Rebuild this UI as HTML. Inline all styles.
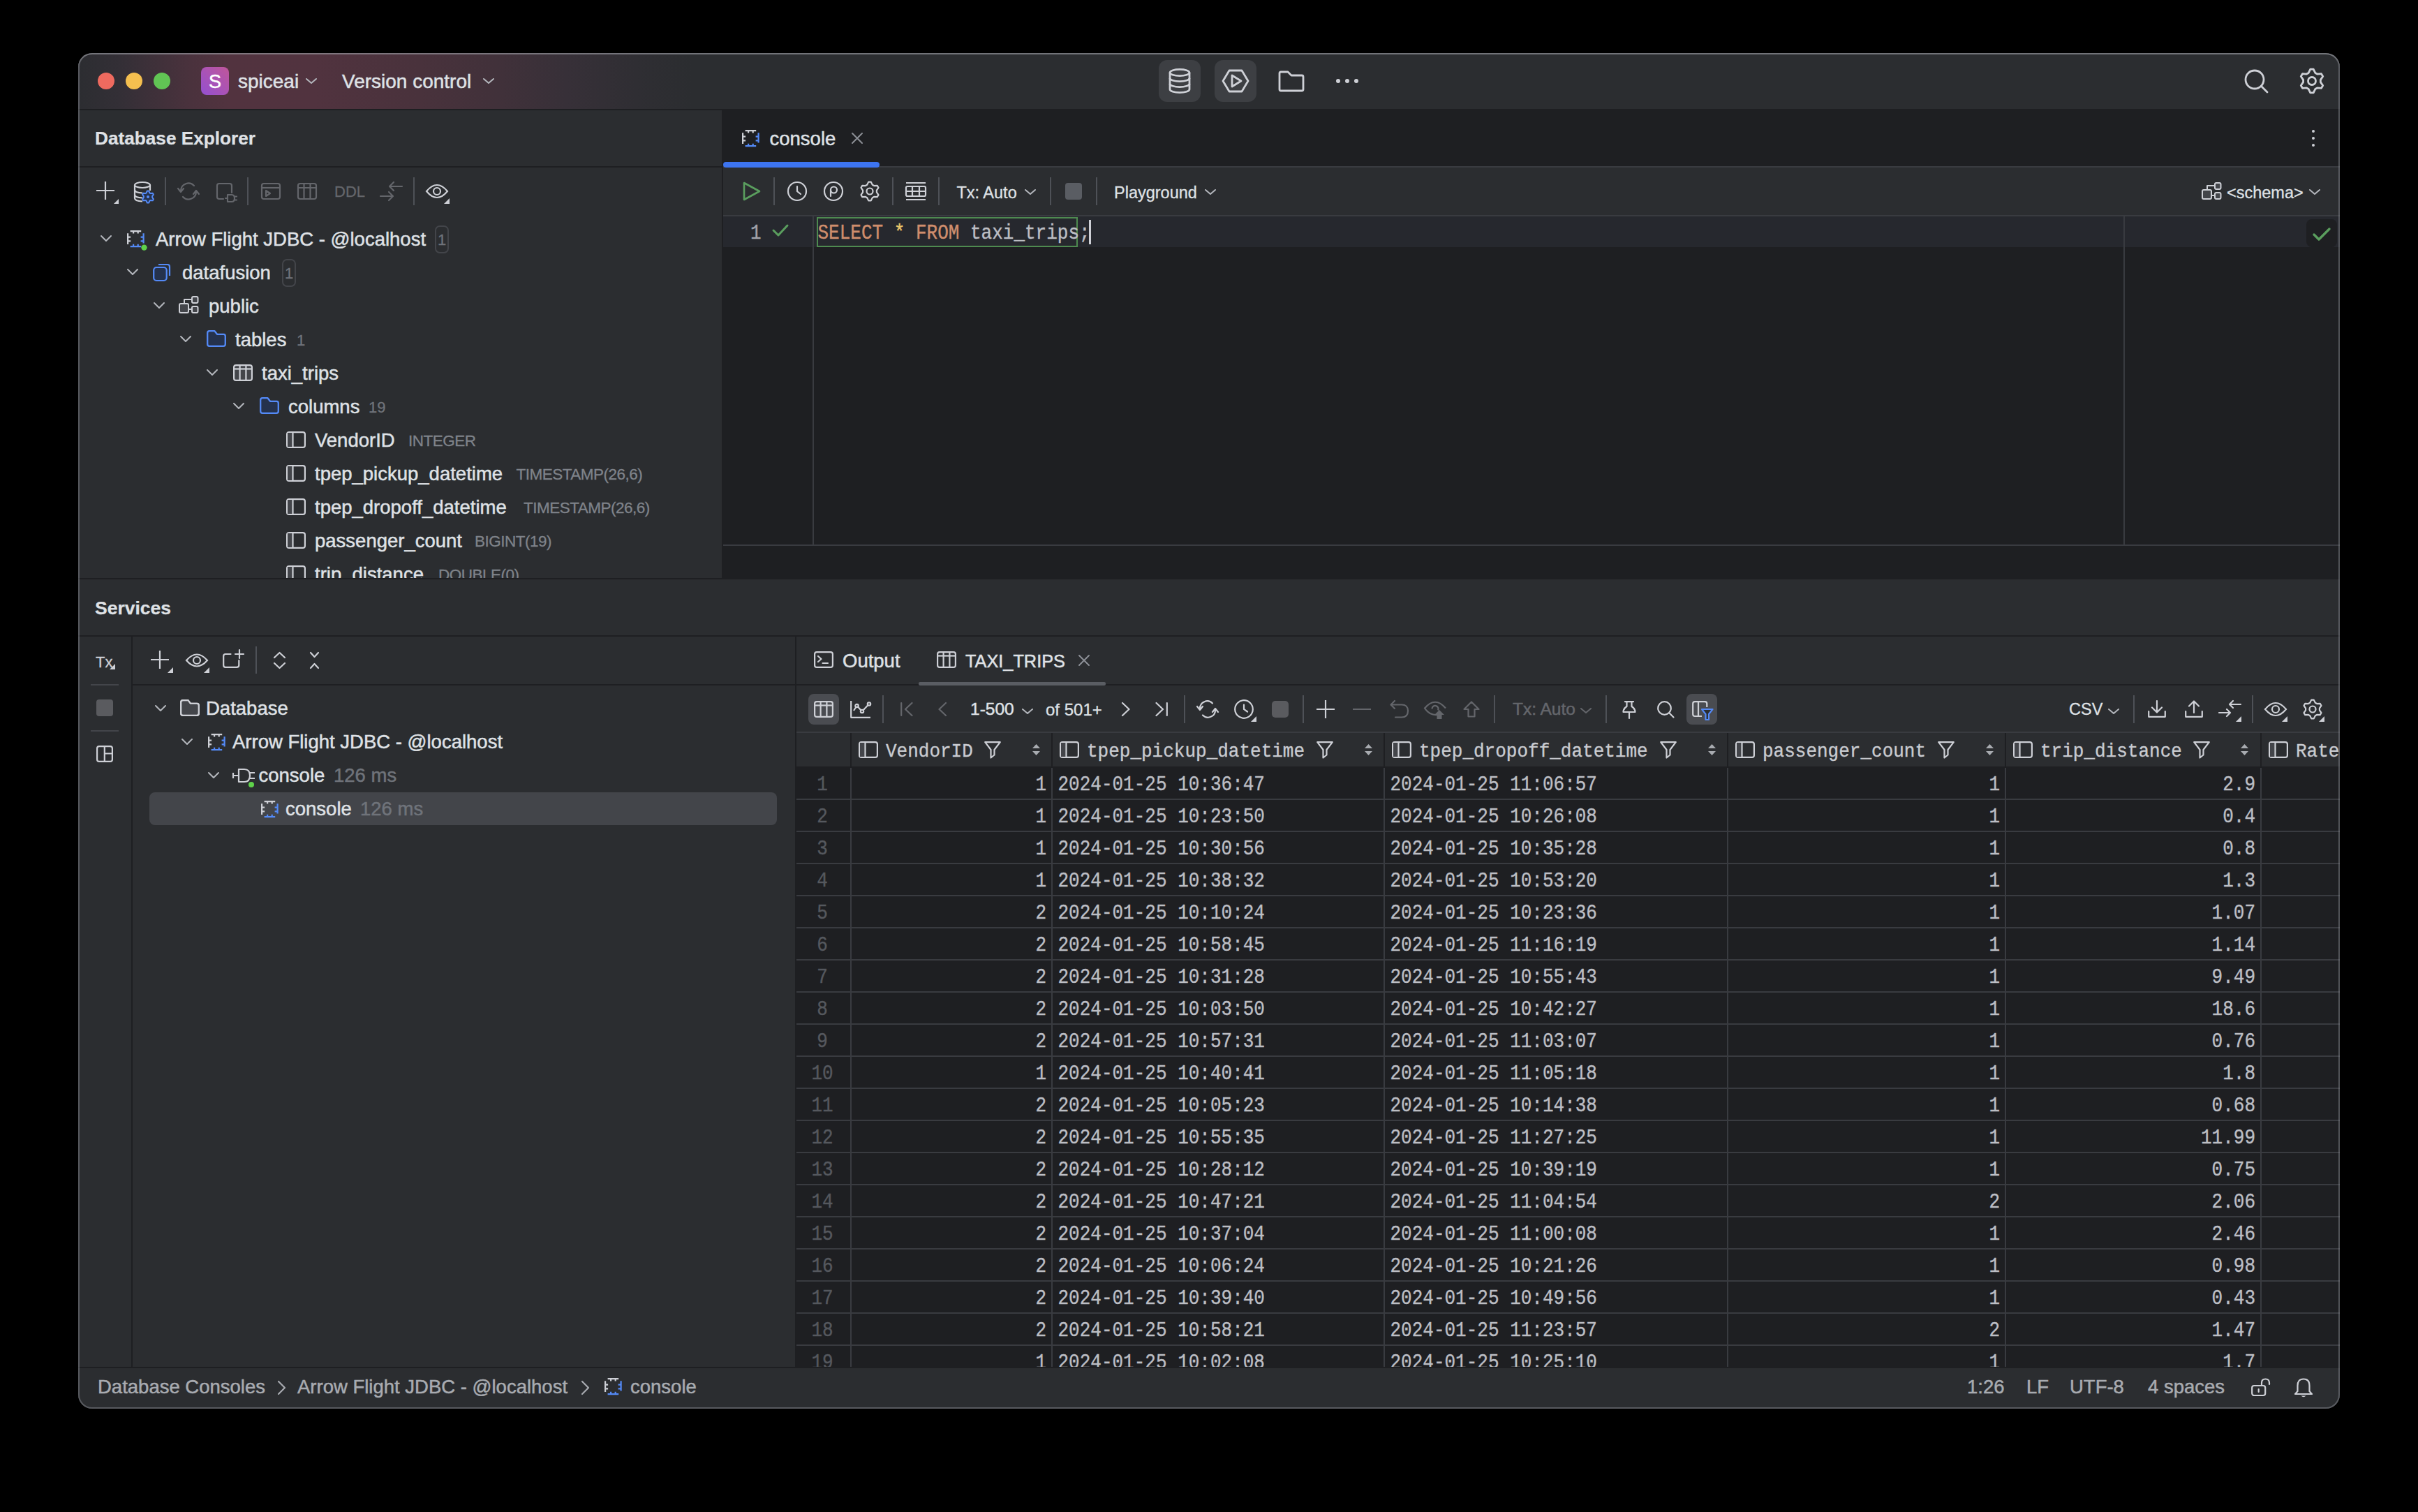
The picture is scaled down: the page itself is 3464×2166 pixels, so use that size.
<!DOCTYPE html><html><head><meta charset="utf-8"><style>
html,body{margin:0;padding:0;background:#000;width:3464px;height:2166px;overflow:hidden;}
*{box-sizing:border-box;}
#w{position:absolute;left:0;top:0;width:3464px;height:2166px;clip-path:inset(76px 112px 148px 112px round 20px);background:#2b2d30;}
#w div, #w svg{position:absolute;}
</style></head><body><div id="w">
<div style="position:absolute;left:112px;top:76px;width:3240px;height:80px;background:#2b2d30;"></div>
<div style="position:absolute;left:112px;top:76px;width:900px;height:80px;background:linear-gradient(90deg,#2c2d31 0px,#332f36 58px,#4a323d 160px,#52333f 218px,#51333f 338px,#49323c 488px,#41313a 600px,#373038 700px,#2f2e33 800px,#2b2d30 880px);"></div>
<div style="position:absolute;left:112px;top:156px;width:3240px;height:2px;background:#1e1f22;"></div>
<div style="position:absolute;left:140px;top:104px;width:24px;height:24px;border-radius:12px;background:#ee6a5f;"></div>
<div style="position:absolute;left:180px;top:104px;width:24px;height:24px;border-radius:12px;background:#f5bf4f;"></div>
<div style="position:absolute;left:220px;top:104px;width:24px;height:24px;border-radius:12px;background:#61c554;"></div>
<div style="position:absolute;left:288px;top:96px;width:40px;height:40px;border-radius:8px;background:linear-gradient(45deg,#9450d0 0%,#c0569a 100%);"></div>
<div style="position:absolute;left:108px;width:400px;text-align:center;top:103.74px;font-family:'Liberation Sans', sans-serif;font-size:27px;line-height:27px;font-weight:400;color:#ffffff;white-space:pre;-webkit-text-stroke:0.5px #ffffff;">S</div>
<div style="position:absolute;left:341px;top:102.90px;font-family:'Liberation Sans', sans-serif;font-size:28px;line-height:28px;font-weight:400;color:#dfe1e5;white-space:pre;-webkit-text-stroke:0.5px #dfe1e5;">spiceai</div>
<svg style="position:absolute;left:438.0px;top:112.0px;overflow:visible;" width="16" height="8.0" viewBox="0 0 16 8.0" fill="none"><path d="M1 1 L8.0 7.0 L15 1" stroke="#b4b7bd" stroke-width="2" stroke-linecap="round" stroke-linejoin="round"/></svg>
<div style="position:absolute;left:490px;top:102.90px;font-family:'Liberation Sans', sans-serif;font-size:28px;line-height:28px;font-weight:400;color:#dfe1e5;white-space:pre;-webkit-text-stroke:0.5px #dfe1e5;">Version control</div>
<svg style="position:absolute;left:692.0px;top:112.0px;overflow:visible;" width="16" height="8.0" viewBox="0 0 16 8.0" fill="none"><path d="M1 1 L8.0 7.0 L15 1" stroke="#b4b7bd" stroke-width="2" stroke-linecap="round" stroke-linejoin="round"/></svg>
<div style="position:absolute;left:1660px;top:86px;width:60px;height:60px;border-radius:12px;background:#3d3f43;"></div>
<div style="position:absolute;left:1740px;top:86px;width:60px;height:60px;border-radius:12px;background:#3d3f43;"></div>
<svg style="position:absolute;left:1674px;top:98px;overflow:visible;" width="32" height="36" viewBox="0 0 32 36" fill="none"><g stroke="#ced0d6" stroke-width="2.8" fill="none"><ellipse cx="16" cy="6" rx="14" ry="4.6"/><path d="M2 6 V30 A14 4.6 0 0 0 30 30 V6"/><path d="M2 14 A14 4.6 0 0 0 30 14"/><path d="M2 22 A14 4.6 0 0 0 30 22"/></g></svg>
<svg style="position:absolute;left:1751px;top:99px;overflow:visible;" width="38" height="34" viewBox="0 0 38 34" fill="none"><g stroke="#ced0d6" stroke-width="2.8" stroke-linejoin="round" fill="none"><path d="M10 2 H28 L37 17 L28 32 H10 L1 17 Z"/><path d="M14 9 V25 L27 17 Z"/></g></svg>
<svg style="position:absolute;left:1832px;top:101px;overflow:visible;" width="36" height="30" viewBox="0 0 36 30" fill="none"><path d="M3 2 H13 L18 7 H33 Q35 7 35 9 V27 Q35 29 33 29 H3 Q1 29 1 27 V4 Q1 2 3 2 Z" stroke="#ced0d6" stroke-width="2.8" stroke-linejoin="round" fill="none"/></svg>
<div style="position:absolute;left:1913.8px;top:112.8px;width:6.4px;height:6.4px;border-radius:4px;background:#ced0d6;"></div>
<div style="position:absolute;left:1926.8px;top:112.8px;width:6.4px;height:6.4px;border-radius:4px;background:#ced0d6;"></div>
<div style="position:absolute;left:1939.8px;top:112.8px;width:6.4px;height:6.4px;border-radius:4px;background:#ced0d6;"></div>
<svg style="position:absolute;left:3214px;top:98px;overflow:visible;" width="38" height="38" viewBox="0 0 38 38" fill="none"><g stroke="#ced0d6" stroke-width="2.8" stroke-linecap="round" fill="none"><circle cx="16" cy="16" r="13"/><path d="M25.5 25.5 L34 34"/></g></svg>
<svg style="position:absolute;left:3293px;top:97px;overflow:visible;" width="38" height="38" viewBox="0 0 38 38" fill="none"><g stroke="#ced0d6" stroke-width="2.8" stroke-linejoin="round" fill="none"><path d="M16.78 2.15 L21.22 2.15 L23.78 7.45 L26.61 9.08 L32.49 8.65 L34.71 12.49 L31.39 17.37 L31.39 20.63 L34.71 25.51 L32.49 29.35 L26.61 28.92 L23.78 30.55 L21.22 35.85 L16.78 35.85 L14.22 30.55 L11.39 28.92 L5.51 29.35 L3.29 25.51 L6.61 20.63 L6.61 17.37 L3.29 12.49 L5.51 8.65 L11.39 9.08 L14.22 7.45 Z"/><circle cx="19" cy="19" r="5.5"/></g></svg>
<div style="position:absolute;left:112px;top:158px;width:922px;height:670px;background:#2b2d30;"></div>
<div style="position:absolute;left:136px;top:185.42px;font-family:'Liberation Sans', sans-serif;font-size:26.2px;line-height:26.2px;font-weight:700;color:#dfe1e5;white-space:pre;-webkit-text-stroke:0.25px #dfe1e5;">Database Explorer</div>
<div style="position:absolute;left:112px;top:238px;width:922px;height:2px;background:#1e1f22;"></div>
<svg style="position:absolute;left:138.0px;top:260.0px;overflow:visible;" width="26" height="26" viewBox="0 0 26 26" fill="none"><path d="M13.0 0 V26 M0 13.0 H26" stroke="#ced0d6" stroke-width="2.2"/></svg>
<svg style="position:absolute;left:163px;top:285px;overflow:visible;" width="7" height="7" viewBox="0 0 7 7" fill="none"><path d="M7 0 L7 7 L0 7 Z" fill="#ced0d6"/></svg>
<svg style="position:absolute;left:192px;top:260px;overflow:visible;" width="26" height="30" viewBox="0 0 26 30" fill="none"><g stroke="#ced0d6" stroke-width="2.2" fill="none"><ellipse cx="12" cy="5" rx="11" ry="4"/><path d="M1 5 V24 Q1 28 12 28.5 M23 5 V13"/><path d="M1 12 Q1 16 12 16.5 M1 19 Q1 23 12 23.5"/></g></svg>
<svg style="position:absolute;left:202px;top:272px;overflow:visible;" width="20" height="20" viewBox="0 0 20 20" fill="none"><path d="M8.88 1.47 L11.12 1.47 L12.37 4.27 L13.77 5.08 L16.82 4.76 L17.95 6.71 L16.15 9.19 L16.15 10.81 L17.95 13.29 L16.82 15.24 L13.77 14.92 L12.37 15.73 L11.12 18.53 L8.88 18.53 L7.63 15.73 L6.23 14.92 L3.18 15.24 L2.05 13.29 L3.85 10.81 L3.85 9.19 L2.05 6.71 L3.18 4.76 L6.23 5.08 L7.63 4.27 Z" stroke="#548af7" stroke-width="2" fill="#25324d" stroke-linejoin="round"/><circle cx="10" cy="10" r="2" fill="#548af7"/></svg>
<div style="position:absolute;left:236.0px;top:254px;width:2.0px;height:40px;background:#4e5157;"></div>
<svg style="position:absolute;left:254px;top:261px;overflow:visible;" width="32" height="26" viewBox="0 0 32 26" fill="none"><g stroke="#64666b" stroke-width="2.2" fill="none" stroke-linecap="round" stroke-linejoin="round"><path d="M24 5 A11 11 0 0 0 5 12"/><path d="M1 9 L5 14 L9 9"/><path d="M8 21 A11 11 0 0 0 27 14"/><path d="M23 17 L27 12 L31 17"/></g></svg>
<svg style="position:absolute;left:310px;top:262px;overflow:visible;" width="30" height="30" viewBox="0 0 30 30" fill="none"><g stroke="#64666b" stroke-width="2.2" fill="none" stroke-linecap="round" stroke-linejoin="round"><path d="M10 23 H4 Q1 23 1 20 V4 Q1 1 4 1 H19 Q22 1 22 4 V14"/><path d="M16 17 H22 Q26 17 26 22 Q26 27 22 27 H16 Z M26 19.5 H29 M26 24.5 H29 M16 22 H13"/></g></svg>
<div style="position:absolute;left:354.0px;top:254px;width:2.0px;height:40px;background:#4e5157;"></div>
<svg style="position:absolute;left:374px;top:262px;overflow:visible;" width="28" height="24" viewBox="0 0 28 24" fill="none"><g stroke="#64666b" stroke-width="2.2" fill="none" stroke-linejoin="round"><rect x="1" y="1" width="26" height="22" rx="3"/><path d="M1 7 H27"/><path d="M7 11 V19 L13 15 Z"/></g></svg>
<svg style="position:absolute;left:426px;top:262px;overflow:visible;" width="28" height="24" viewBox="0 0 28 24" fill="none"><g stroke="#64666b" stroke-width="2.2" fill="none"><rect x="1" y="1" width="26" height="22" rx="3"/><path d="M1 7 H27 M9.5 1 V23 M18.5 1 V23"/></g></svg>
<div style="position:absolute;left:479px;top:263.98px;font-family:'Liberation Sans', sans-serif;font-size:22px;line-height:22px;font-weight:400;color:#64666b;white-space:pre;-webkit-text-stroke:0.3px #64666b;">DDL</div>
<svg style="position:absolute;left:544px;top:259px;overflow:visible;" width="34" height="28" viewBox="0 0 34 28" fill="none"><g stroke="#64666b" stroke-width="2.2" fill="none" stroke-linecap="round" stroke-linejoin="round"><path d="M32 8 H16 M20 2 L14 8 L20 14"/><path d="M1 22 H17 M13 16 L19 22 L13 28"/></g></svg>
<div style="position:absolute;left:592.0px;top:254px;width:2.0px;height:40px;background:#4e5157;"></div>
<svg style="position:absolute;left:610px;top:262px;overflow:visible;" width="32" height="24" viewBox="0 0 32 24" fill="none"><g stroke="#ced0d6" stroke-width="2.2" fill="none"><path d="M1 12 Q16 -6 31 12 Q16 30 1 12 Z"/><circle cx="16" cy="12" r="5"/></g></svg>
<svg style="position:absolute;left:636px;top:284px;overflow:visible;" width="8" height="8" viewBox="0 0 8 8" fill="none"><path d="M8 0 L8 8 L0 8 Z" fill="#ced0d6"/></svg>
<svg style="position:absolute;left:144px;top:337px;overflow:visible;" width="16" height="10" viewBox="0 0 16 10" fill="none"><path d="M1 1 L8 8 L15 1" stroke="#b4b7bd" stroke-width="2" fill="none" stroke-linecap="round" stroke-linejoin="round"/></svg>
<svg style="position:absolute;left:182px;top:330px;overflow:visible;" width="25" height="25" viewBox="0 0 25 25" fill="none"><g stroke-width="2.2" fill="none" stroke-linecap="butt"><path d="M4.6 1.2 H20.2 M9.1 1.2 V4.6 M15.7 1.2 V4.6" stroke="#ced0d6"/><path d="M1.1 4.2 V19.9 M1.1 9.7 H5.1 M1.1 15.3 H5.1" stroke="#ced0d6"/><path d="M23.6 4.2 V18.5 M23.6 9.7 H19.6 M23.6 15.3 H19.6" stroke="#548af7"/><path d="M4.6 23.1 H20.2 M9.1 23.1 V19.7 M15.7 23.1 V19.7" stroke="#548af7"/></g><circle cx="24.5" cy="24.6" r="4.2" fill="#5fd14a"/></svg>
<div style="position:absolute;left:223px;top:329.32px;font-family:'Liberation Sans', sans-serif;font-size:27.5px;line-height:27.5px;font-weight:400;color:#dfe1e5;white-space:pre;-webkit-text-stroke:0.5px #dfe1e5;">Arrow Flight JDBC - @localhost</div>
<div style="position:absolute;left:623px;top:322.5px;width:20px;height:40px;border:2px solid #43454a;border-radius:7px;"></div>
<div style="position:absolute;left:433px;width:400px;text-align:center;top:333.48px;font-family:'Liberation Sans', sans-serif;font-size:22px;line-height:22px;font-weight:400;color:#6f737a;white-space:pre;-webkit-text-stroke:0.3px #6f737a;">1</div>
<svg style="position:absolute;left:182px;top:385px;overflow:visible;" width="16" height="10" viewBox="0 0 16 10" fill="none"><path d="M1 1 L8 8 L15 1" stroke="#b4b7bd" stroke-width="2" fill="none" stroke-linecap="round" stroke-linejoin="round"/></svg>
<svg style="position:absolute;left:219px;top:377px;overflow:visible;" width="26" height="26" viewBox="0 0 26 26" fill="none"><path d="M8 2 H21 Q24 2 24 5 V18" stroke="#548af7" stroke-width="2.2" fill="none"/><rect x="1.2" y="6" width="18.5" height="19" rx="4" stroke="#548af7" stroke-width="2.2" fill="#25324d"/></svg>
<div style="position:absolute;left:261px;top:377.32px;font-family:'Liberation Sans', sans-serif;font-size:27.5px;line-height:27.5px;font-weight:400;color:#dfe1e5;white-space:pre;-webkit-text-stroke:0.5px #dfe1e5;">datafusion</div>
<div style="position:absolute;left:404px;top:370.5px;width:20px;height:40px;border:2px solid #43454a;border-radius:7px;"></div>
<div style="position:absolute;left:214px;width:400px;text-align:center;top:381.48px;font-family:'Liberation Sans', sans-serif;font-size:22px;line-height:22px;font-weight:400;color:#6f737a;white-space:pre;-webkit-text-stroke:0.3px #6f737a;">1</div>
<svg style="position:absolute;left:220px;top:433px;overflow:visible;" width="16" height="10" viewBox="0 0 16 10" fill="none"><path d="M1 1 L8 8 L15 1" stroke="#b4b7bd" stroke-width="2" fill="none" stroke-linecap="round" stroke-linejoin="round"/></svg>
<svg style="position:absolute;left:256px;top:424px;overflow:visible;" width="28" height="26" viewBox="0 0 28 26" fill="none"><g stroke="#ced0d6" stroke-width="2" stroke-linejoin="round"><path d="M8 11 V5 H19" fill="none"/><path d="M14 19 H19" fill="none"/><rect x="1" y="11" width="13" height="13" rx="2" fill="#43454a"/><rect x="19" y="1" width="8.5" height="9" rx="2" fill="#43454a"/><rect x="19" y="15" width="8.5" height="9" rx="2" fill="#43454a"/></g></svg>
<div style="position:absolute;left:299px;top:425.32px;font-family:'Liberation Sans', sans-serif;font-size:27.5px;line-height:27.5px;font-weight:400;color:#dfe1e5;white-space:pre;-webkit-text-stroke:0.5px #dfe1e5;">public</div>
<svg style="position:absolute;left:258px;top:481px;overflow:visible;" width="16" height="10" viewBox="0 0 16 10" fill="none"><path d="M1 1 L8 8 L15 1" stroke="#b4b7bd" stroke-width="2" fill="none" stroke-linecap="round" stroke-linejoin="round"/></svg>
<svg style="position:absolute;left:296px;top:473px;overflow:visible;" width="28" height="24" viewBox="0 0 28 24" fill="none"><path d="M4 1.2 H11.5 L15 5.8 H24.5 Q26.8 5.8 26.8 8.5 V20 Q26.8 22.8 24 22.8 H4 Q1.2 22.8 1.2 20 V4 Q1.2 1.2 4 1.2 Z" stroke="#548af7" stroke-width="2.3" fill="#25324d" stroke-linejoin="round"/></svg>
<div style="position:absolute;left:337px;top:473.32px;font-family:'Liberation Sans', sans-serif;font-size:27.5px;line-height:27.5px;font-weight:400;color:#dfe1e5;white-space:pre;-webkit-text-stroke:0.5px #dfe1e5;">tables</div>
<div style="position:absolute;left:425px;top:476.98px;font-family:'Liberation Sans', sans-serif;font-size:22px;line-height:22px;font-weight:400;color:#6f737a;white-space:pre;-webkit-text-stroke:0.3px #6f737a;">1</div>
<svg style="position:absolute;left:296px;top:529px;overflow:visible;" width="16" height="10" viewBox="0 0 16 10" fill="none"><path d="M1 1 L8 8 L15 1" stroke="#b4b7bd" stroke-width="2" fill="none" stroke-linecap="round" stroke-linejoin="round"/></svg>
<svg style="position:absolute;left:334px;top:522px;overflow:visible;" width="28" height="24" viewBox="0 0 28 24" fill="none"><g stroke="#ced0d6" stroke-width="2.2"><rect x="1.1" y="1.1" width="25.8" height="21.8" rx="3" fill="#43454a"/><path d="M1.1 6.5 H26.9"/><path d="M9.6 1 V23 M18.4 1 V23"/></g></svg>
<div style="position:absolute;left:375px;top:521.32px;font-family:'Liberation Sans', sans-serif;font-size:27.5px;line-height:27.5px;font-weight:400;color:#dfe1e5;white-space:pre;-webkit-text-stroke:0.5px #dfe1e5;">taxi_trips</div>
<svg style="position:absolute;left:334px;top:577px;overflow:visible;" width="16" height="10" viewBox="0 0 16 10" fill="none"><path d="M1 1 L8 8 L15 1" stroke="#b4b7bd" stroke-width="2" fill="none" stroke-linecap="round" stroke-linejoin="round"/></svg>
<svg style="position:absolute;left:372px;top:569px;overflow:visible;" width="28" height="24" viewBox="0 0 28 24" fill="none"><path d="M4 1.2 H11.5 L15 5.8 H24.5 Q26.8 5.8 26.8 8.5 V20 Q26.8 22.8 24 22.8 H4 Q1.2 22.8 1.2 20 V4 Q1.2 1.2 4 1.2 Z" stroke="#548af7" stroke-width="2.3" fill="#25324d" stroke-linejoin="round"/></svg>
<div style="position:absolute;left:413px;top:569.32px;font-family:'Liberation Sans', sans-serif;font-size:27.5px;line-height:27.5px;font-weight:400;color:#dfe1e5;white-space:pre;-webkit-text-stroke:0.5px #dfe1e5;">columns</div>
<div style="position:absolute;left:528px;top:572.98px;font-family:'Liberation Sans', sans-serif;font-size:22px;line-height:22px;font-weight:400;color:#6f737a;white-space:pre;-webkit-text-stroke:0.3px #6f737a;">19</div>
<svg style="position:absolute;left:410px;top:618px;overflow:visible;" width="28" height="24" viewBox="0 0 28 24" fill="none"><g stroke="#ced0d6" stroke-width="2.2"><rect x="1.1" y="1.1" width="25.8" height="21.8" rx="3" fill="none"/><rect x="2" y="2" width="7" height="20" fill="#43454a" stroke="none"/><path d="M9.5 1 V23"/></g></svg>
<div style="position:absolute;left:451px;top:617.32px;font-family:'Liberation Sans', sans-serif;font-size:27.5px;line-height:27.5px;font-weight:400;color:#dfe1e5;white-space:pre;-webkit-text-stroke:0.5px #dfe1e5;">VendorID</div>
<div style="position:absolute;left:585px;top:621.05px;font-family:'Liberation Sans', sans-serif;font-size:22.5px;line-height:22.5px;font-weight:400;color:#7f838a;white-space:pre;-webkit-text-stroke:0.3px #7f838a;letter-spacing:-0.5px;">INTEGER</div>
<svg style="position:absolute;left:410px;top:666px;overflow:visible;" width="28" height="24" viewBox="0 0 28 24" fill="none"><g stroke="#ced0d6" stroke-width="2.2"><rect x="1.1" y="1.1" width="25.8" height="21.8" rx="3" fill="none"/><rect x="2" y="2" width="7" height="20" fill="#43454a" stroke="none"/><path d="M9.5 1 V23"/></g></svg>
<div style="position:absolute;left:451px;top:665.32px;font-family:'Liberation Sans', sans-serif;font-size:27.5px;line-height:27.5px;font-weight:400;color:#dfe1e5;white-space:pre;-webkit-text-stroke:0.5px #dfe1e5;">tpep_pickup_datetime</div>
<div style="position:absolute;left:739.5px;top:669.05px;font-family:'Liberation Sans', sans-serif;font-size:22.5px;line-height:22.5px;font-weight:400;color:#7f838a;white-space:pre;-webkit-text-stroke:0.3px #7f838a;letter-spacing:-0.5px;">TIMESTAMP(26,6)</div>
<svg style="position:absolute;left:410px;top:714px;overflow:visible;" width="28" height="24" viewBox="0 0 28 24" fill="none"><g stroke="#ced0d6" stroke-width="2.2"><rect x="1.1" y="1.1" width="25.8" height="21.8" rx="3" fill="none"/><rect x="2" y="2" width="7" height="20" fill="#43454a" stroke="none"/><path d="M9.5 1 V23"/></g></svg>
<div style="position:absolute;left:451px;top:713.32px;font-family:'Liberation Sans', sans-serif;font-size:27.5px;line-height:27.5px;font-weight:400;color:#dfe1e5;white-space:pre;-webkit-text-stroke:0.5px #dfe1e5;">tpep_dropoff_datetime</div>
<div style="position:absolute;left:750px;top:717.05px;font-family:'Liberation Sans', sans-serif;font-size:22.5px;line-height:22.5px;font-weight:400;color:#7f838a;white-space:pre;-webkit-text-stroke:0.3px #7f838a;letter-spacing:-0.5px;">TIMESTAMP(26,6)</div>
<svg style="position:absolute;left:410px;top:762px;overflow:visible;" width="28" height="24" viewBox="0 0 28 24" fill="none"><g stroke="#ced0d6" stroke-width="2.2"><rect x="1.1" y="1.1" width="25.8" height="21.8" rx="3" fill="none"/><rect x="2" y="2" width="7" height="20" fill="#43454a" stroke="none"/><path d="M9.5 1 V23"/></g></svg>
<div style="position:absolute;left:451px;top:761.32px;font-family:'Liberation Sans', sans-serif;font-size:27.5px;line-height:27.5px;font-weight:400;color:#dfe1e5;white-space:pre;-webkit-text-stroke:0.5px #dfe1e5;">passenger_count</div>
<div style="position:absolute;left:680px;top:765.05px;font-family:'Liberation Sans', sans-serif;font-size:22.5px;line-height:22.5px;font-weight:400;color:#7f838a;white-space:pre;-webkit-text-stroke:0.3px #7f838a;letter-spacing:-0.5px;">BIGINT(19)</div>
<svg style="position:absolute;left:410px;top:810px;overflow:visible;" width="28" height="24" viewBox="0 0 28 24" fill="none"><g stroke="#ced0d6" stroke-width="2.2"><rect x="1.1" y="1.1" width="25.8" height="21.8" rx="3" fill="none"/><rect x="2" y="2" width="7" height="20" fill="#43454a" stroke="none"/><path d="M9.5 1 V23"/></g></svg>
<div style="position:absolute;left:451px;top:809.32px;font-family:'Liberation Sans', sans-serif;font-size:27.5px;line-height:27.5px;font-weight:400;color:#dfe1e5;white-space:pre;-webkit-text-stroke:0.5px #dfe1e5;">trip_distance</div>
<div style="position:absolute;left:628px;top:813.05px;font-family:'Liberation Sans', sans-serif;font-size:22.5px;line-height:22.5px;font-weight:400;color:#7f838a;white-space:pre;-webkit-text-stroke:0.3px #7f838a;letter-spacing:-0.5px;">DOUBLE(0)</div>
<div style="position:absolute;left:1034px;top:158px;width:2318px;height:670px;background:#1e1f22;"></div>
<div style="position:absolute;left:1034px;top:158px;width:2px;height:670px;background:#1e1f22;"></div>
<div style="position:absolute;left:1036px;top:238px;width:2316px;height:2px;background:#393b40;"></div>
<div style="position:absolute;left:1036px;top:240px;width:2316px;height:68px;background:#2b2d30;"></div>
<div style="position:absolute;left:1036px;top:308px;width:2316px;height:2px;background:#393b40;"></div>
<svg style="position:absolute;left:1063px;top:186px;overflow:visible;" width="25" height="25" viewBox="0 0 25 25" fill="none"><g stroke-width="2.2" fill="none" stroke-linecap="butt"><path d="M4.6 1.2 H20.2 M9.1 1.2 V4.6 M15.7 1.2 V4.6" stroke="#ced0d6"/><path d="M1.1 4.2 V19.9 M1.1 9.7 H5.1 M1.1 15.3 H5.1" stroke="#ced0d6"/><path d="M23.6 4.2 V18.5 M23.6 9.7 H19.6 M23.6 15.3 H19.6" stroke="#548af7"/><path d="M4.6 23.1 H20.2 M9.1 23.1 V19.7 M15.7 23.1 V19.7" stroke="#548af7"/></g></svg>
<div style="position:absolute;left:1102.5px;top:185.32px;font-family:'Liberation Sans', sans-serif;font-size:27.5px;line-height:27.5px;font-weight:400;color:#dfe1e5;white-space:pre;-webkit-text-stroke:0.5px #dfe1e5;">console</div>
<svg style="position:absolute;left:1220px;top:190px;overflow:visible;" width="16" height="16" viewBox="0 0 16 16" fill="none"><path d="M1 1 L15 15 M15 1 L1 15" stroke="#8c8f96" stroke-width="2" stroke-linecap="round"/></svg>
<div style="position:absolute;left:1036px;top:232px;width:224px;height:8px;border-radius:4px;background:#3d74f0;"></div>
<div style="position:absolute;left:3311.7px;top:185.7px;width:4.6px;height:4.6px;border-radius:3px;background:#ced0d6;"></div>
<div style="position:absolute;left:3311.7px;top:195.7px;width:4.6px;height:4.6px;border-radius:3px;background:#ced0d6;"></div>
<div style="position:absolute;left:3311.7px;top:205.7px;width:4.6px;height:4.6px;border-radius:3px;background:#ced0d6;"></div>
<svg style="position:absolute;left:1064px;top:260px;overflow:visible;" width="26" height="28" viewBox="0 0 26 28" fill="none"><path d="M2 2 V26 L24 14 Z" stroke="#5a9e5e" stroke-width="2.6" fill="none" stroke-linejoin="round"/></svg>
<div style="position:absolute;left:1107.5px;top:254px;width:2.0px;height:40px;background:#4e5157;"></div>
<svg style="position:absolute;left:1127px;top:259px;overflow:visible;" width="30" height="30" viewBox="0 0 30 30" fill="none"><g stroke="#ced0d6" stroke-width="2.2" fill="none" stroke-linecap="round"><circle cx="15" cy="15" r="13"/><path d="M15 8 V15 L20 19"/></g></svg>
<svg style="position:absolute;left:1179px;top:259px;overflow:visible;" width="30" height="30" viewBox="0 0 30 30" fill="none"><g stroke="#ced0d6" stroke-width="2.2" fill="none" stroke-linecap="round"><circle cx="15" cy="15" r="13"/><circle cx="15.5" cy="13" r="4.5"/><path d="M11 13 V22"/></g></svg>
<svg style="position:absolute;left:1231px;top:259px;overflow:visible;" width="30" height="30" viewBox="0 0 30 30" fill="none"><g stroke="#ced0d6" stroke-width="2.2" fill="none" stroke-linejoin="round"><path d="M13.24 1.62 L16.76 1.62 L18.83 5.76 L21.09 7.07 L25.71 6.78 L27.47 9.83 L24.91 13.69 L24.91 16.31 L27.47 20.17 L25.71 23.22 L21.09 22.93 L18.83 24.24 L16.76 28.38 L13.24 28.38 L11.17 24.24 L8.91 22.93 L4.29 23.22 L2.53 20.17 L5.09 16.31 L5.09 13.69 L2.53 9.83 L4.29 6.78 L8.91 7.07 L11.17 5.76 Z"/><circle cx="15" cy="15" r="4.5"/></g></svg>
<div style="position:absolute;left:1278.0px;top:254px;width:2.0px;height:40px;background:#4e5157;"></div>
<svg style="position:absolute;left:1297px;top:260px;overflow:visible;" width="30" height="28" viewBox="0 0 30 28" fill="none"><g stroke="#ced0d6" stroke-width="2.2" fill="none"><path d="M1 2 H29 M1 26 H29"/><rect x="1" y="7" width="28" height="14" rx="2"/><path d="M1 14 H29 M10 7 V21 M20 7 V21"/></g></svg>
<div style="position:absolute;left:1343.5px;top:254px;width:2.0px;height:40px;background:#4e5157;"></div>
<div style="position:absolute;left:1370.5px;top:264.71px;font-family:'Liberation Sans', sans-serif;font-size:23.5px;line-height:23.5px;font-weight:400;color:#dfe1e5;white-space:pre;-webkit-text-stroke:0.3px #dfe1e5;">Tx: Auto</div>
<svg style="position:absolute;left:1468.0px;top:271.0px;overflow:visible;" width="16" height="8.0" viewBox="0 0 16 8.0" fill="none"><path d="M1 1 L8.0 7.0 L15 1" stroke="#b4b7bd" stroke-width="2" stroke-linecap="round" stroke-linejoin="round"/></svg>
<div style="position:absolute;left:1504.0px;top:254px;width:2.0px;height:40px;background:#4e5157;"></div>
<div style="position:absolute;left:1526px;top:262px;width:24px;height:24px;border-radius:4px;background:#5a5d63;"></div>
<div style="position:absolute;left:1569.5px;top:254px;width:2.0px;height:40px;background:#4e5157;"></div>
<div style="position:absolute;left:1596px;top:264.71px;font-family:'Liberation Sans', sans-serif;font-size:23.5px;line-height:23.5px;font-weight:400;color:#dfe1e5;white-space:pre;-webkit-text-stroke:0.3px #dfe1e5;">Playground</div>
<svg style="position:absolute;left:1726.0px;top:271.0px;overflow:visible;" width="16" height="8.0" viewBox="0 0 16 8.0" fill="none"><path d="M1 1 L8.0 7.0 L15 1" stroke="#b4b7bd" stroke-width="2" stroke-linecap="round" stroke-linejoin="round"/></svg>
<svg style="position:absolute;left:3154px;top:261px;overflow:visible;" width="28" height="26" viewBox="0 0 28 26" fill="none"><g stroke="#ced0d6" stroke-width="2" stroke-linejoin="round"><path d="M8 11 V5 H19" fill="none"/><path d="M14 19 H19" fill="none"/><rect x="1" y="11" width="13" height="13" rx="2" fill="#43454a"/><rect x="19" y="1" width="8.5" height="9" rx="2" fill="#43454a"/><rect x="19" y="15" width="8.5" height="9" rx="2" fill="#43454a"/></g></svg>
<div style="position:absolute;left:3190px;top:264.71px;font-family:'Liberation Sans', sans-serif;font-size:23.5px;line-height:23.5px;font-weight:400;color:#dfe1e5;white-space:pre;-webkit-text-stroke:0.3px #dfe1e5;">&lt;schema&gt;</div>
<svg style="position:absolute;left:3308.0px;top:271.0px;overflow:visible;" width="16" height="8.0" viewBox="0 0 16 8.0" fill="none"><path d="M1 1 L8.0 7.0 L15 1" stroke="#b4b7bd" stroke-width="2" stroke-linecap="round" stroke-linejoin="round"/></svg>
<div style="position:absolute;left:1036px;top:310px;width:2316px;height:44px;background:#26282e;"></div>
<div style="position:absolute;left:1164px;top:310px;width:2px;height:471px;background:#393b40;"></div>
<div style="position:absolute;left:3042px;top:310px;width:2px;height:471px;background:#393b40;"></div>
<div style="position:absolute;left:1036px;top:780px;width:2316px;height:2px;background:#393b40;"></div>
<div style="position:absolute;right:2373.5px;top:321.57px;font-family:'Liberation Mono', monospace;font-size:26px;line-height:26px;font-weight:400;color:#a1a3ab;white-space:pre;transform:scaleY(1.13);transform-origin:0 19.93px;-webkit-text-stroke:0.35px #a1a3ab;">1</div>
<svg style="position:absolute;left:1106px;top:321px;overflow:visible;" width="24" height="18" viewBox="0 0 24 18" fill="none"><path d="M2 9 L9 16 L22 2" stroke="#5a9e5e" stroke-width="3" fill="none" stroke-linecap="round" stroke-linejoin="round"/></svg>
<div style="position:absolute;left:1170px;top:311px;width:374px;height:43px;border:2px solid #4e8a50;"></div>
<div style="position:absolute;left:1171.5px;top:321.57px;font-family:'Liberation Mono', monospace;font-size:26px;line-height:26px;white-space:pre;color:#bcbec4;transform:scaleY(1.13);transform-origin:0 19.93px;-webkit-text-stroke:0.35px currentColor;"><span style="color:#cf8e6d">SELECT</span> <span style="color:#e8c46a">*</span> <span style="color:#cf8e6d">FROM</span> taxi_trips;</div>
<div style="position:absolute;left:1559.5px;top:315px;width:3.0px;height:35px;background:#ced0d6;"></div>
<div style="position:absolute;left:3304px;top:314px;width:44px;height:40px;border-radius:8px;background:#1e1f22;"></div>
<svg style="position:absolute;left:3313px;top:326px;overflow:visible;" width="26" height="20" viewBox="0 0 26 20" fill="none"><path d="M2 10 L9 17 L24 2" stroke="#5a9e5e" stroke-width="3.4" fill="none" stroke-linecap="round" stroke-linejoin="round"/></svg>
<div style="position:absolute;left:112px;top:828px;width:3240px;height:2px;background:#1e1f22;"></div>
<div style="position:absolute;left:112px;top:830px;width:3240px;height:1128px;background:#2b2d30;"></div>
<div style="position:absolute;left:136px;top:858.17px;font-family:'Liberation Sans', sans-serif;font-size:26.5px;line-height:26.5px;font-weight:700;color:#dfe1e5;white-space:pre;-webkit-text-stroke:0.25px #dfe1e5;">Services</div>
<div style="position:absolute;left:112px;top:910px;width:3240px;height:2px;background:#1e1f22;"></div>
<div style="position:absolute;left:188px;top:912px;width:2px;height:1046px;background:#1e1f22;"></div>
<div style="position:absolute;left:137px;top:937.98px;font-family:'Liberation Sans', sans-serif;font-size:22px;line-height:22px;font-weight:400;color:#ced0d6;white-space:pre;-webkit-text-stroke:0.3px #ced0d6;">Tx</div>
<svg style="position:absolute;left:156.5px;top:950.5px;overflow:visible;" width="8" height="8" viewBox="0 0 8 8" fill="none"><path d="M8 0 L8 8 L0 8 Z" fill="#ced0d6"/></svg>
<div style="position:absolute;left:130px;top:980px;width:40px;height:2px;background:#43454a;"></div>
<div style="position:absolute;left:138px;top:1002px;width:24px;height:24px;border-radius:4px;background:#5a5b5f;"></div>
<div style="position:absolute;left:130px;top:1046px;width:40px;height:2px;background:#43454a;"></div>
<svg style="position:absolute;left:138px;top:1068px;overflow:visible;" width="24" height="24" viewBox="0 0 24 24" fill="none"><g stroke="#ced0d6" stroke-width="2.2" fill="none"><rect x="1.1" y="1.1" width="21.8" height="21.8" rx="3"/><path d="M11.8 1 V23 M11.8 11.5 H23"/></g></svg>
<div style="position:absolute;left:190px;top:980px;width:949px;height:2px;background:#1e1f22;"></div>
<svg style="position:absolute;left:216.0px;top:932.0px;overflow:visible;" width="26" height="26" viewBox="0 0 26 26" fill="none"><path d="M13.0 0 V26 M0 13.0 H26" stroke="#ced0d6" stroke-width="2.2"/></svg>
<svg style="position:absolute;left:240px;top:956px;overflow:visible;" width="8" height="8" viewBox="0 0 8 8" fill="none"><path d="M8 0 L8 8 L0 8 Z" fill="#ced0d6"/></svg>
<svg style="position:absolute;left:266px;top:935px;overflow:visible;" width="32" height="22" viewBox="0 0 32 22" fill="none"><g stroke="#ced0d6" stroke-width="2.2" fill="none"><path d="M1 11 Q16 -6 31 11 Q16 28 1 11 Z"/><circle cx="16" cy="11" r="5"/></g></svg>
<svg style="position:absolute;left:292px;top:956px;overflow:visible;" width="8" height="8" viewBox="0 0 8 8" fill="none"><path d="M8 0 L8 8 L0 8 Z" fill="#ced0d6"/></svg>
<svg style="position:absolute;left:319px;top:929px;overflow:visible;" width="32" height="28" viewBox="0 0 32 28" fill="none"><g stroke="#ced0d6" stroke-width="2.2" fill="none" stroke-linecap="round"><path d="M11.5 8 H4 Q1.2 8 1.2 11 V24 Q1.2 26.8 4 26.8 H20 Q23.3 26.8 23.3 24 V17"/><path d="M24 2 V14 M18 8 H30"/></g></svg>
<div style="position:absolute;left:366.0px;top:926px;width:2.0px;height:39px;background:#4e5157;"></div>
<svg style="position:absolute;left:392px;top:934px;overflow:visible;" width="17" height="24" viewBox="0 0 17 24" fill="none"><g stroke="#ced0d6" stroke-width="2.2" fill="none" stroke-linecap="round" stroke-linejoin="round"><path d="M1 8 L8.5 1 L16 8"/><path d="M1 16 L8.5 23 L16 16"/></g></svg>
<svg style="position:absolute;left:444px;top:934px;overflow:visible;" width="13" height="24" viewBox="0 0 13 24" fill="none"><g stroke="#ced0d6" stroke-width="2.2" fill="none" stroke-linecap="round" stroke-linejoin="round"><path d="M1 1 L6.5 7 L12 1"/><path d="M1 23 L6.5 17 L12 23"/></g></svg>
<div style="position:absolute;left:214px;top:1134.5px;width:899px;height:47.5px;border-radius:8px;background:#43454a;"></div>
<svg style="position:absolute;left:222px;top:1010px;overflow:visible;" width="16" height="10" viewBox="0 0 16 10" fill="none"><path d="M1 1 L8 8 L15 1" stroke="#b4b7bd" stroke-width="2" fill="none" stroke-linecap="round" stroke-linejoin="round"/></svg>
<svg style="position:absolute;left:258px;top:1002px;overflow:visible;" width="28" height="24" viewBox="0 0 28 24" fill="none"><path d="M4 1.2 H11.5 L15 5.8 H24.5 Q26.8 5.8 26.8 8.5 V20 Q26.8 22.8 24 22.8 H4 Q1.2 22.8 1.2 20 V4 Q1.2 1.2 4 1.2 Z" stroke="#ced0d6" stroke-width="2.2" fill="none" stroke-linejoin="round"/></svg>
<svg style="position:absolute;left:258px;top:1002px;overflow:visible;" width="28" height="24" viewBox="0 0 28 24" fill="none"><path d="M4 3 H11 L14.5 7.5 H24 Q25.5 7.5 25.5 9 V20 Q25.5 21.5 24 21.5 H4 Q2.5 21.5 2.5 20 V4.5 Q2.5 3 4 3 Z" fill="#43454a"/></svg>
<svg style="position:absolute;left:258px;top:1002px;overflow:visible;" width="28" height="24" viewBox="0 0 28 24" fill="none"><path d="M4 1.2 H11.5 L15 5.8 H24.5 Q26.8 5.8 26.8 8.5 V20 Q26.8 22.8 24 22.8 H4 Q1.2 22.8 1.2 20 V4 Q1.2 1.2 4 1.2 Z" stroke="#ced0d6" stroke-width="2.2" fill="none" stroke-linejoin="round"/></svg>
<div style="position:absolute;left:295px;top:1001.32px;font-family:'Liberation Sans', sans-serif;font-size:27.5px;line-height:27.5px;font-weight:400;color:#dfe1e5;white-space:pre;-webkit-text-stroke:0.5px #dfe1e5;">Database</div>
<svg style="position:absolute;left:260px;top:1058px;overflow:visible;" width="16" height="10" viewBox="0 0 16 10" fill="none"><path d="M1 1 L8 8 L15 1" stroke="#b4b7bd" stroke-width="2" fill="none" stroke-linecap="round" stroke-linejoin="round"/></svg>
<svg style="position:absolute;left:297.5px;top:1051px;overflow:visible;" width="25" height="25" viewBox="0 0 25 25" fill="none"><g stroke-width="2.2" fill="none" stroke-linecap="butt"><path d="M4.6 1.2 H20.2 M9.1 1.2 V4.6 M15.7 1.2 V4.6" stroke="#ced0d6"/><path d="M1.1 4.2 V19.9 M1.1 9.7 H5.1 M1.1 15.3 H5.1" stroke="#ced0d6"/><path d="M23.6 4.2 V18.5 M23.6 9.7 H19.6 M23.6 15.3 H19.6" stroke="#548af7"/><path d="M4.6 23.1 H20.2 M9.1 23.1 V19.7 M15.7 23.1 V19.7" stroke="#548af7"/></g></svg>
<div style="position:absolute;left:333px;top:1049.32px;font-family:'Liberation Sans', sans-serif;font-size:27.5px;line-height:27.5px;font-weight:400;color:#dfe1e5;white-space:pre;-webkit-text-stroke:0.5px #dfe1e5;">Arrow Flight JDBC - @localhost</div>
<svg style="position:absolute;left:298px;top:1106px;overflow:visible;" width="16" height="10" viewBox="0 0 16 10" fill="none"><path d="M1 1 L8 8 L15 1" stroke="#b4b7bd" stroke-width="2" fill="none" stroke-linecap="round" stroke-linejoin="round"/></svg>
<svg style="position:absolute;left:332px;top:1097px;overflow:visible;" width="36" height="30" viewBox="0 0 36 30" fill="none"><g stroke="#ced0d6" stroke-width="2.2" fill="none" stroke-linejoin="round"><path d="M10 5 H18 Q26 5 26 14 Q26 23 18 23 H10 Z"/><path d="M26 10 H33 M26 18 H33 M10 14 H2 M2 10 V18"/></g><circle cx="28" cy="27" r="4" fill="#5fd14a"/></svg>
<div style="position:absolute;left:370.5px;top:1097.32px;font-family:'Liberation Sans', sans-serif;font-size:27.5px;line-height:27.5px;font-weight:400;color:#dfe1e5;white-space:pre;-webkit-text-stroke:0.5px #dfe1e5;">console</div>
<div style="position:absolute;left:478px;top:1097.32px;font-family:'Liberation Sans', sans-serif;font-size:27.5px;line-height:27.5px;font-weight:400;color:#6f737a;white-space:pre;-webkit-text-stroke:0.5px #6f737a;">126 ms</div>
<svg style="position:absolute;left:374px;top:1147px;overflow:visible;" width="25" height="25" viewBox="0 0 25 25" fill="none"><g stroke-width="2.2" fill="none" stroke-linecap="butt"><path d="M4.6 1.2 H20.2 M9.1 1.2 V4.6 M15.7 1.2 V4.6" stroke="#ced0d6"/><path d="M1.1 4.2 V19.9 M1.1 9.7 H5.1 M1.1 15.3 H5.1" stroke="#ced0d6"/><path d="M23.6 4.2 V18.5 M23.6 9.7 H19.6 M23.6 15.3 H19.6" stroke="#548af7"/><path d="M4.6 23.1 H20.2 M9.1 23.1 V19.7 M15.7 23.1 V19.7" stroke="#548af7"/></g></svg>
<div style="position:absolute;left:409px;top:1145.32px;font-family:'Liberation Sans', sans-serif;font-size:27.5px;line-height:27.5px;font-weight:400;color:#dfe1e5;white-space:pre;-webkit-text-stroke:0.5px #dfe1e5;">console</div>
<div style="position:absolute;left:516px;top:1145.32px;font-family:'Liberation Sans', sans-serif;font-size:27.5px;line-height:27.5px;font-weight:400;color:#6f737a;white-space:pre;-webkit-text-stroke:0.5px #6f737a;">126 ms</div>
<div style="position:absolute;left:1139px;top:912px;width:2px;height:1046px;background:#1e1f22;"></div>
<svg style="position:absolute;left:1166px;top:933px;overflow:visible;" width="28" height="24" viewBox="0 0 28 24" fill="none"><g stroke="#ced0d6" stroke-width="2.2" fill="none" stroke-linecap="round" stroke-linejoin="round"><rect x="1.1" y="1.1" width="25.8" height="21.8" rx="3"/><path d="M6 7 L10.5 11 L6 15 M12.5 17 H20"/></g></svg>
<div style="position:absolute;left:1207px;top:933.32px;font-family:'Liberation Sans', sans-serif;font-size:27.5px;line-height:27.5px;font-weight:400;color:#dfe1e5;white-space:pre;-webkit-text-stroke:0.5px #dfe1e5;">Output</div>
<svg style="position:absolute;left:1342px;top:933px;overflow:visible;" width="28" height="24" viewBox="0 0 28 24" fill="none"><g stroke="#ced0d6" stroke-width="2.2"><rect x="1.1" y="1.1" width="25.8" height="21.8" rx="3" fill="none"/><path d="M1.1 6.5 H26.9"/><path d="M9.6 1 V23 M18.4 1 V23"/></g></svg>
<div style="position:absolute;left:1383px;top:935.18px;font-family:'Liberation Sans', sans-serif;font-size:25.3px;line-height:25.3px;font-weight:400;color:#dfe1e5;white-space:pre;-webkit-text-stroke:0.5px #dfe1e5;">TAXI_TRIPS</div>
<svg style="position:absolute;left:1544.5px;top:938px;overflow:visible;" width="16" height="16" viewBox="0 0 16 16" fill="none"><path d="M1 1 L15 15 M15 1 L1 15" stroke="#8c8f96" stroke-width="2" stroke-linecap="round"/></svg>
<div style="position:absolute;left:1141px;top:980px;width:2211px;height:2px;background:#1e1f22;"></div>
<div style="position:absolute;left:1316px;top:977px;width:268px;height:5px;border-radius:2px;background:#5a5d63;"></div>
<div style="position:absolute;left:1158px;top:994px;width:44px;height:44px;border-radius:8px;background:#4a4c51;"></div>
<svg style="position:absolute;left:1166px;top:1004px;overflow:visible;" width="28" height="24" viewBox="0 0 28 24" fill="none"><g stroke="#ced0d6" stroke-width="2.2"><rect x="1.1" y="1.1" width="25.8" height="21.8" rx="3" fill="none"/><path d="M1.1 6.5 H26.9"/><path d="M9.6 1 V23 M18.4 1 V23"/></g></svg>
<svg style="position:absolute;left:1218px;top:1004px;overflow:visible;" width="31" height="25" viewBox="0 0 31 25" fill="none"><g stroke="#ced0d6" stroke-width="2.2" fill="none" stroke-linejoin="round"><path d="M1.2 0 V23.8 H29"/><path d="M5 14 L9.5 7 L17 15 L27 4.5"/><circle cx="9.5" cy="7" r="2.2" fill="#2b2d30"/><circle cx="17" cy="15" r="2.2" fill="#2b2d30"/><circle cx="27" cy="4.5" r="2.2" fill="#2b2d30"/></g></svg>
<div style="position:absolute;left:1264.0px;top:996px;width:2.0px;height:40px;background:#4e5157;"></div>
<svg style="position:absolute;left:1290px;top:1006px;overflow:visible;" width="18" height="20" viewBox="0 0 18 20" fill="none"><g stroke="#64666b" stroke-width="2.2" fill="none" stroke-linecap="round" stroke-linejoin="round"><path d="M1.2 1 V19"/><path d="M16.5 1 L7 10 L16.5 19"/></g></svg>
<svg style="position:absolute;left:1344px;top:1006px;overflow:visible;" width="12" height="20" viewBox="0 0 12 20" fill="none"><path d="M11 1 L1.5 10 L11 19" stroke="#64666b" stroke-width="2.2" fill="none" stroke-linecap="round" stroke-linejoin="round"/></svg>
<div style="position:absolute;left:1390px;top:1004.36px;font-family:'Liberation Sans', sans-serif;font-size:24.5px;line-height:24.5px;font-weight:400;color:#dfe1e5;white-space:pre;-webkit-text-stroke:0.5px #dfe1e5;">1-500</div>
<svg style="position:absolute;left:1464.0px;top:1014.5px;overflow:visible;" width="16" height="8.0" viewBox="0 0 16 8.0" fill="none"><path d="M1 1 L8.0 7.0 L15 1" stroke="#b4b7bd" stroke-width="2" stroke-linecap="round" stroke-linejoin="round"/></svg>
<div style="position:absolute;left:1498px;top:1004.78px;font-family:'Liberation Sans', sans-serif;font-size:24px;line-height:24px;font-weight:400;color:#dfe1e5;white-space:pre;-webkit-text-stroke:0.3px #dfe1e5;">of 501+</div>
<svg style="position:absolute;left:1607px;top:1006px;overflow:visible;" width="12" height="20" viewBox="0 0 12 20" fill="none"><path d="M1 1 L10.5 10 L1 19" stroke="#ced0d6" stroke-width="2.2" fill="none" stroke-linecap="round" stroke-linejoin="round"/></svg>
<svg style="position:absolute;left:1654.5px;top:1006px;overflow:visible;" width="18" height="20" viewBox="0 0 18 20" fill="none"><g stroke="#ced0d6" stroke-width="2.2" fill="none" stroke-linecap="round" stroke-linejoin="round"><path d="M16.8 1 V19"/><path d="M1.5 1 L11 10 L1.5 19"/></g></svg>
<div style="position:absolute;left:1696.0px;top:996px;width:2.0px;height:40px;background:#4e5157;"></div>
<svg style="position:absolute;left:1714px;top:1004px;overflow:visible;" width="32" height="24" viewBox="0 0 32 24" fill="none"><g stroke="#ced0d6" stroke-width="2.2" fill="none" stroke-linecap="round" stroke-linejoin="round"><path d="M23 3.5 A10.5 10.5 0 0 0 5 11"/><path d="M1 8 L5 13 L9 8"/><path d="M9 20.5 A10.5 10.5 0 0 0 27 13"/><path d="M23 16 L27 11 L31 16"/></g></svg>
<svg style="position:absolute;left:1768px;top:1002px;overflow:visible;" width="28" height="28" viewBox="0 0 28 28" fill="none"><g stroke="#ced0d6" stroke-width="2.2" fill="none" stroke-linecap="round"><circle cx="14" cy="14" r="12.8"/><path d="M14 7.5 V14 L19 17.5"/></g></svg>
<svg style="position:absolute;left:1792px;top:1026px;overflow:visible;" width="8" height="8" viewBox="0 0 8 8" fill="none"><path d="M8 0 L8 8 L0 8 Z" fill="#ced0d6"/></svg>
<div style="position:absolute;left:1822px;top:1004px;width:24px;height:24px;border-radius:5px;background:#5a5b5f;"></div>
<div style="position:absolute;left:1866.0px;top:996px;width:2.0px;height:40px;background:#4e5157;"></div>
<svg style="position:absolute;left:1886.0px;top:1003.0px;overflow:visible;" width="26" height="26" viewBox="0 0 26 26" fill="none"><path d="M13.0 0 V26 M0 13.0 H26" stroke="#ced0d6" stroke-width="2.2"/></svg>
<div style="position:absolute;left:1938px;top:1015px;width:26px;height:2.2000000000000455px;background:#64666b;"></div>
<svg style="position:absolute;left:1991px;top:1003px;overflow:visible;" width="28" height="26" viewBox="0 0 28 26" fill="none"><g stroke="#64666b" stroke-width="2.2" fill="none" stroke-linecap="round" stroke-linejoin="round"><path d="M7 1 L1.5 6.5 L7 12"/><path d="M2 6.5 H17 Q26 6.5 26 15.5 Q26 24.5 17 24.5 H8"/></g></svg>
<svg style="position:absolute;left:2040px;top:1004px;overflow:visible;" width="32" height="26" viewBox="0 0 32 26" fill="none"><g stroke="#64666b" stroke-width="2.2" fill="none"><path d="M19 20 Q8 21 1 10.5 Q16 -7 31 10.5"/><path d="M11.5 11.5 A4.5 4.5 0 1 1 20 13.5"/></g><path d="M22 13 L29 20 H25.5 V26 H18.5 V20 H15 Z" fill="#64666b"/></svg>
<svg style="position:absolute;left:2096px;top:1004px;overflow:visible;" width="24" height="24" viewBox="0 0 24 24" fill="none"><path d="M12 1.5 L22.5 12 H16.5 V22.5 H7.5 V12 H1.5 Z" stroke="#64666b" stroke-width="2.2" fill="none" stroke-linejoin="round"/></svg>
<div style="position:absolute;left:2140.0px;top:996px;width:2.0px;height:40px;background:#4e5157;"></div>
<div style="position:absolute;left:2167px;top:1003.86px;font-family:'Liberation Sans', sans-serif;font-size:24.5px;line-height:24.5px;font-weight:400;color:#64666b;white-space:pre;-webkit-text-stroke:0.5px #64666b;">Tx: Auto</div>
<svg style="position:absolute;left:2264.0px;top:1014.0px;overflow:visible;" width="16" height="8.0" viewBox="0 0 16 8.0" fill="none"><path d="M1 1 L8.0 7.0 L15 1" stroke="#64666b" stroke-width="2" stroke-linecap="round" stroke-linejoin="round"/></svg>
<div style="position:absolute;left:2300.0px;top:996px;width:2.0px;height:40px;background:#4e5157;"></div>
<svg style="position:absolute;left:2324px;top:1004px;overflow:visible;" width="20" height="26" viewBox="0 0 20 26" fill="none"><g stroke="#ced0d6" stroke-width="2.2" fill="none" stroke-linejoin="round" stroke-linecap="round"><path d="M4 1.2 H16 M6.5 1.2 V8 Q1.5 11 1.5 16 H18.5 Q18.5 11 13.5 8 V1.2"/><path d="M10 16 V25"/></g></svg>
<svg style="position:absolute;left:2374px;top:1004px;overflow:visible;" width="25" height="25" viewBox="0 0 25 25" fill="none"><g stroke="#ced0d6" stroke-width="2.2" fill="none" stroke-linecap="round"><circle cx="10.5" cy="10.5" r="9.3"/><path d="M17.5 17.5 L23.5 23.5"/></g></svg>
<div style="position:absolute;left:2416px;top:994px;width:44px;height:44px;border-radius:8px;background:#4a4c51;"></div>
<svg style="position:absolute;left:2424px;top:1004px;overflow:visible;" width="32" height="28" viewBox="0 0 32 28" fill="none"><g stroke="#ced0d6" stroke-width="2.2" fill="none"><path d="M14 22 H4 Q1.2 22 1.2 19 V4 Q1.2 1.2 4 1.2 H18.5 Q21.3 1.2 21.3 4 V9"/><path d="M9 1 V22"/></g><path d="M14 12 H29.5 L24 19 V27 H19.5 V19 Z" stroke="#548af7" stroke-width="2.2" fill="#2b2d30" stroke-linejoin="round"/></svg>
<div style="position:absolute;left:2964px;top:1005.21px;font-family:'Liberation Sans', sans-serif;font-size:23.5px;line-height:23.5px;font-weight:400;color:#dfe1e5;white-space:pre;-webkit-text-stroke:0.3px #dfe1e5;">CSV</div>
<svg style="position:absolute;left:3020.0px;top:1014.5px;overflow:visible;" width="16" height="8.0" viewBox="0 0 16 8.0" fill="none"><path d="M1 1 L8.0 7.0 L15 1" stroke="#b4b7bd" stroke-width="2" stroke-linecap="round" stroke-linejoin="round"/></svg>
<div style="position:absolute;left:3056.0px;top:996px;width:2.0px;height:40px;background:#4e5157;"></div>
<svg style="position:absolute;left:3077px;top:1003px;overflow:visible;" width="26" height="26" viewBox="0 0 26 26" fill="none"><g stroke="#ced0d6" stroke-width="2.2" fill="none" stroke-linecap="round" stroke-linejoin="round"><path d="M13 1 V17 M6 10.5 L13 17.5 L20 10.5"/><path d="M1.2 16 V23.8 H24.8 V16"/></g></svg>
<svg style="position:absolute;left:3130px;top:1003px;overflow:visible;" width="26" height="26" viewBox="0 0 26 26" fill="none"><g stroke="#ced0d6" stroke-width="2.2" fill="none" stroke-linecap="round" stroke-linejoin="round"><path d="M13 18 V2 M6 8.5 L13 1.5 L20 8.5"/><path d="M1.2 16 V23.8 H24.8 V16"/></g></svg>
<svg style="position:absolute;left:3178px;top:1002px;overflow:visible;" width="34" height="28" viewBox="0 0 34 28" fill="none"><g stroke="#ced0d6" stroke-width="2.2" fill="none" stroke-linecap="round" stroke-linejoin="round"><path d="M32 7 H17 M21 2 L16 7 L21 12"/><path d="M1 19 H16 M12 14 L17 19 L12 24"/></g></svg>
<svg style="position:absolute;left:3203px;top:1026px;overflow:visible;" width="8" height="8" viewBox="0 0 8 8" fill="none"><path d="M8 0 L8 8 L0 8 Z" fill="#ced0d6"/></svg>
<div style="position:absolute;left:3226.0px;top:996px;width:2.0px;height:40px;background:#4e5157;"></div>
<svg style="position:absolute;left:3244px;top:1004px;overflow:visible;" width="32" height="24" viewBox="0 0 32 24" fill="none"><g stroke="#ced0d6" stroke-width="2.2" fill="none"><path d="M1 12 Q16 -6 31 12 Q16 30 1 12 Z"/><circle cx="16" cy="12" r="5"/></g></svg>
<svg style="position:absolute;left:3269px;top:1026px;overflow:visible;" width="8" height="8" viewBox="0 0 8 8" fill="none"><path d="M8 0 L8 8 L0 8 Z" fill="#ced0d6"/></svg>
<svg style="position:absolute;left:3298px;top:1001px;overflow:visible;" width="30" height="30" viewBox="0 0 30 30" fill="none"><g stroke="#ced0d6" stroke-width="2.2" fill="none" stroke-linejoin="round"><path d="M13.24 1.62 L16.76 1.62 L18.83 5.76 L21.09 7.07 L25.71 6.78 L27.47 9.83 L24.91 13.69 L24.91 16.31 L27.47 20.17 L25.71 23.22 L21.09 22.93 L18.83 24.24 L16.76 28.38 L13.24 28.38 L11.17 24.24 L8.91 22.93 L4.29 23.22 L2.53 20.17 L5.09 16.31 L5.09 13.69 L2.53 9.83 L4.29 6.78 L8.91 7.07 L11.17 5.76 Z"/><circle cx="15" cy="15" r="4.5"/></g></svg>
<svg style="position:absolute;left:3322px;top:1026px;overflow:visible;" width="8" height="8" viewBox="0 0 8 8" fill="none"><path d="M8 0 L8 8 L0 8 Z" fill="#ced0d6"/></svg>
<div style="position:absolute;left:1141px;top:1048px;width:2211px;height:2px;background:#393b40;"></div>
<div style="position:absolute;left:1141px;top:1050px;width:2211px;height:48px;background:#2b2d30;"></div>
<div style="position:absolute;left:1141px;top:1098px;width:2211px;height:860px;background:#1e1f22;"></div>
<svg style="position:absolute;left:1230px;top:1062px;overflow:visible;" width="28" height="24" viewBox="0 0 28 24" fill="none"><g stroke="#ced0d6" stroke-width="2.2"><rect x="1.1" y="1.1" width="25.8" height="21.8" rx="3" fill="none"/><rect x="2" y="2" width="7" height="20" fill="#43454a" stroke="none"/><path d="M9.5 1 V23"/></g></svg>
<div style="position:absolute;left:1269px;top:1063.57px;font-family:'Liberation Mono', monospace;font-size:26px;line-height:26px;font-weight:400;color:#c9cbd0;white-space:pre;transform:scaleY(1.05);transform-origin:0 19.93px;-webkit-text-stroke:0.35px #c9cbd0;">VendorID</div>
<svg style="position:absolute;left:1410px;top:1062px;overflow:visible;" width="24" height="25" viewBox="0 0 24 25" fill="none"><path d="M1.2 1.2 H22.8 L14.5 12 V19.5 L9.5 23.5 V12 Z" stroke="#ced0d6" stroke-width="2.2" fill="none" stroke-linejoin="round"/></svg>
<svg style="position:absolute;left:1479px;top:1066px;overflow:visible;" width="11" height="16" viewBox="0 0 11 16" fill="none"><path d="M5.5 0 L11 6 H0 Z M0 10 H11 L5.5 16 Z" fill="#a8abb0"/></svg>
<svg style="position:absolute;left:1518px;top:1062px;overflow:visible;" width="28" height="24" viewBox="0 0 28 24" fill="none"><g stroke="#ced0d6" stroke-width="2.2"><rect x="1.1" y="1.1" width="25.8" height="21.8" rx="3" fill="none"/><rect x="2" y="2" width="7" height="20" fill="#43454a" stroke="none"/><path d="M9.5 1 V23"/></g></svg>
<div style="position:absolute;left:1557px;top:1063.57px;font-family:'Liberation Mono', monospace;font-size:26px;line-height:26px;font-weight:400;color:#c9cbd0;white-space:pre;transform:scaleY(1.05);transform-origin:0 19.93px;-webkit-text-stroke:0.35px #c9cbd0;">tpep_pickup_datetime</div>
<svg style="position:absolute;left:1886px;top:1062px;overflow:visible;" width="24" height="25" viewBox="0 0 24 25" fill="none"><path d="M1.2 1.2 H22.8 L14.5 12 V19.5 L9.5 23.5 V12 Z" stroke="#ced0d6" stroke-width="2.2" fill="none" stroke-linejoin="round"/></svg>
<svg style="position:absolute;left:1955px;top:1066px;overflow:visible;" width="11" height="16" viewBox="0 0 11 16" fill="none"><path d="M5.5 0 L11 6 H0 Z M0 10 H11 L5.5 16 Z" fill="#a8abb0"/></svg>
<svg style="position:absolute;left:1994px;top:1062px;overflow:visible;" width="28" height="24" viewBox="0 0 28 24" fill="none"><g stroke="#ced0d6" stroke-width="2.2"><rect x="1.1" y="1.1" width="25.8" height="21.8" rx="3" fill="none"/><rect x="2" y="2" width="7" height="20" fill="#43454a" stroke="none"/><path d="M9.5 1 V23"/></g></svg>
<div style="position:absolute;left:2033px;top:1063.57px;font-family:'Liberation Mono', monospace;font-size:26px;line-height:26px;font-weight:400;color:#c9cbd0;white-space:pre;transform:scaleY(1.05);transform-origin:0 19.93px;-webkit-text-stroke:0.35px #c9cbd0;">tpep_dropoff_datetime</div>
<svg style="position:absolute;left:2378px;top:1062px;overflow:visible;" width="24" height="25" viewBox="0 0 24 25" fill="none"><path d="M1.2 1.2 H22.8 L14.5 12 V19.5 L9.5 23.5 V12 Z" stroke="#ced0d6" stroke-width="2.2" fill="none" stroke-linejoin="round"/></svg>
<svg style="position:absolute;left:2447px;top:1066px;overflow:visible;" width="11" height="16" viewBox="0 0 11 16" fill="none"><path d="M5.5 0 L11 6 H0 Z M0 10 H11 L5.5 16 Z" fill="#a8abb0"/></svg>
<svg style="position:absolute;left:2486px;top:1062px;overflow:visible;" width="28" height="24" viewBox="0 0 28 24" fill="none"><g stroke="#ced0d6" stroke-width="2.2"><rect x="1.1" y="1.1" width="25.8" height="21.8" rx="3" fill="none"/><rect x="2" y="2" width="7" height="20" fill="#43454a" stroke="none"/><path d="M9.5 1 V23"/></g></svg>
<div style="position:absolute;left:2525px;top:1063.57px;font-family:'Liberation Mono', monospace;font-size:26px;line-height:26px;font-weight:400;color:#c9cbd0;white-space:pre;transform:scaleY(1.05);transform-origin:0 19.93px;-webkit-text-stroke:0.35px #c9cbd0;">passenger_count</div>
<svg style="position:absolute;left:2776px;top:1062px;overflow:visible;" width="24" height="25" viewBox="0 0 24 25" fill="none"><path d="M1.2 1.2 H22.8 L14.5 12 V19.5 L9.5 23.5 V12 Z" stroke="#ced0d6" stroke-width="2.2" fill="none" stroke-linejoin="round"/></svg>
<svg style="position:absolute;left:2845px;top:1066px;overflow:visible;" width="11" height="16" viewBox="0 0 11 16" fill="none"><path d="M5.5 0 L11 6 H0 Z M0 10 H11 L5.5 16 Z" fill="#a8abb0"/></svg>
<svg style="position:absolute;left:2884px;top:1062px;overflow:visible;" width="28" height="24" viewBox="0 0 28 24" fill="none"><g stroke="#ced0d6" stroke-width="2.2"><rect x="1.1" y="1.1" width="25.8" height="21.8" rx="3" fill="none"/><rect x="2" y="2" width="7" height="20" fill="#43454a" stroke="none"/><path d="M9.5 1 V23"/></g></svg>
<div style="position:absolute;left:2923px;top:1063.57px;font-family:'Liberation Mono', monospace;font-size:26px;line-height:26px;font-weight:400;color:#c9cbd0;white-space:pre;transform:scaleY(1.05);transform-origin:0 19.93px;-webkit-text-stroke:0.35px #c9cbd0;">trip_distance</div>
<svg style="position:absolute;left:3142px;top:1062px;overflow:visible;" width="24" height="25" viewBox="0 0 24 25" fill="none"><path d="M1.2 1.2 H22.8 L14.5 12 V19.5 L9.5 23.5 V12 Z" stroke="#ced0d6" stroke-width="2.2" fill="none" stroke-linejoin="round"/></svg>
<svg style="position:absolute;left:3210px;top:1066px;overflow:visible;" width="11" height="16" viewBox="0 0 11 16" fill="none"><path d="M5.5 0 L11 6 H0 Z M0 10 H11 L5.5 16 Z" fill="#a8abb0"/></svg>
<svg style="position:absolute;left:3250px;top:1062px;overflow:visible;" width="28" height="24" viewBox="0 0 28 24" fill="none"><g stroke="#ced0d6" stroke-width="2.2"><rect x="1.1" y="1.1" width="25.8" height="21.8" rx="3" fill="none"/><rect x="2" y="2" width="7" height="20" fill="#43454a" stroke="none"/><path d="M9.5 1 V23"/></g></svg>
<div style="position:absolute;left:3289px;top:1063.57px;font-family:'Liberation Mono', monospace;font-size:26px;line-height:26px;font-weight:400;color:#c9cbd0;white-space:pre;transform:scaleY(1.05);transform-origin:0 19.93px;-webkit-text-stroke:0.35px #c9cbd0;">RatecodeID</div>
<div style="position:absolute;left:1218px;top:1050px;width:2px;height:48px;background:#1e1f22;"></div>
<div style="position:absolute;left:1506px;top:1050px;width:2px;height:48px;background:#1e1f22;"></div>
<div style="position:absolute;left:1982px;top:1050px;width:2px;height:48px;background:#1e1f22;"></div>
<div style="position:absolute;left:2474px;top:1050px;width:2px;height:48px;background:#1e1f22;"></div>
<div style="position:absolute;left:2872px;top:1050px;width:2px;height:48px;background:#1e1f22;"></div>
<div style="position:absolute;left:3238px;top:1050px;width:2px;height:48px;background:#1e1f22;"></div>
<div style="position:absolute;left:1141px;top:1144px;width:2211px;height:2px;background:#393b40;"></div>
<div style="position:absolute;left:978px;width:400px;text-align:center;top:1112.07px;font-family:'Liberation Mono', monospace;font-size:26px;line-height:26px;font-weight:400;color:#55585e;white-space:pre;transform:scaleY(1.13);transform-origin:0 19.93px;-webkit-text-stroke:0.35px #55585e;">1</div>
<div style="position:absolute;right:1965px;top:1112.07px;font-family:'Liberation Mono', monospace;font-size:26px;line-height:26px;font-weight:400;color:#bcbec4;white-space:pre;transform:scaleY(1.13);transform-origin:0 19.93px;-webkit-text-stroke:0.35px #bcbec4;">1</div>
<div style="position:absolute;left:1515.5px;top:1112.07px;font-family:'Liberation Mono', monospace;font-size:26px;line-height:26px;font-weight:400;color:#bcbec4;white-space:pre;transform:scaleY(1.13);transform-origin:0 19.93px;-webkit-text-stroke:0.35px #bcbec4;">2024-01-25 10:36:47</div>
<div style="position:absolute;left:1991.5px;top:1112.07px;font-family:'Liberation Mono', monospace;font-size:26px;line-height:26px;font-weight:400;color:#bcbec4;white-space:pre;transform:scaleY(1.13);transform-origin:0 19.93px;-webkit-text-stroke:0.35px #bcbec4;">2024-01-25 11:06:57</div>
<div style="position:absolute;right:599px;top:1112.07px;font-family:'Liberation Mono', monospace;font-size:26px;line-height:26px;font-weight:400;color:#bcbec4;white-space:pre;transform:scaleY(1.13);transform-origin:0 19.93px;-webkit-text-stroke:0.35px #bcbec4;">1</div>
<div style="position:absolute;right:233px;top:1112.07px;font-family:'Liberation Mono', monospace;font-size:26px;line-height:26px;font-weight:400;color:#bcbec4;white-space:pre;transform:scaleY(1.13);transform-origin:0 19.93px;-webkit-text-stroke:0.35px #bcbec4;">2.9</div>
<div style="position:absolute;left:1141px;top:1190px;width:2211px;height:2px;background:#393b40;"></div>
<div style="position:absolute;left:978px;width:400px;text-align:center;top:1158.07px;font-family:'Liberation Mono', monospace;font-size:26px;line-height:26px;font-weight:400;color:#55585e;white-space:pre;transform:scaleY(1.13);transform-origin:0 19.93px;-webkit-text-stroke:0.35px #55585e;">2</div>
<div style="position:absolute;right:1965px;top:1158.07px;font-family:'Liberation Mono', monospace;font-size:26px;line-height:26px;font-weight:400;color:#bcbec4;white-space:pre;transform:scaleY(1.13);transform-origin:0 19.93px;-webkit-text-stroke:0.35px #bcbec4;">1</div>
<div style="position:absolute;left:1515.5px;top:1158.07px;font-family:'Liberation Mono', monospace;font-size:26px;line-height:26px;font-weight:400;color:#bcbec4;white-space:pre;transform:scaleY(1.13);transform-origin:0 19.93px;-webkit-text-stroke:0.35px #bcbec4;">2024-01-25 10:23:50</div>
<div style="position:absolute;left:1991.5px;top:1158.07px;font-family:'Liberation Mono', monospace;font-size:26px;line-height:26px;font-weight:400;color:#bcbec4;white-space:pre;transform:scaleY(1.13);transform-origin:0 19.93px;-webkit-text-stroke:0.35px #bcbec4;">2024-01-25 10:26:08</div>
<div style="position:absolute;right:599px;top:1158.07px;font-family:'Liberation Mono', monospace;font-size:26px;line-height:26px;font-weight:400;color:#bcbec4;white-space:pre;transform:scaleY(1.13);transform-origin:0 19.93px;-webkit-text-stroke:0.35px #bcbec4;">1</div>
<div style="position:absolute;right:233px;top:1158.07px;font-family:'Liberation Mono', monospace;font-size:26px;line-height:26px;font-weight:400;color:#bcbec4;white-space:pre;transform:scaleY(1.13);transform-origin:0 19.93px;-webkit-text-stroke:0.35px #bcbec4;">0.4</div>
<div style="position:absolute;left:1141px;top:1236px;width:2211px;height:2px;background:#393b40;"></div>
<div style="position:absolute;left:978px;width:400px;text-align:center;top:1204.07px;font-family:'Liberation Mono', monospace;font-size:26px;line-height:26px;font-weight:400;color:#55585e;white-space:pre;transform:scaleY(1.13);transform-origin:0 19.93px;-webkit-text-stroke:0.35px #55585e;">3</div>
<div style="position:absolute;right:1965px;top:1204.07px;font-family:'Liberation Mono', monospace;font-size:26px;line-height:26px;font-weight:400;color:#bcbec4;white-space:pre;transform:scaleY(1.13);transform-origin:0 19.93px;-webkit-text-stroke:0.35px #bcbec4;">1</div>
<div style="position:absolute;left:1515.5px;top:1204.07px;font-family:'Liberation Mono', monospace;font-size:26px;line-height:26px;font-weight:400;color:#bcbec4;white-space:pre;transform:scaleY(1.13);transform-origin:0 19.93px;-webkit-text-stroke:0.35px #bcbec4;">2024-01-25 10:30:56</div>
<div style="position:absolute;left:1991.5px;top:1204.07px;font-family:'Liberation Mono', monospace;font-size:26px;line-height:26px;font-weight:400;color:#bcbec4;white-space:pre;transform:scaleY(1.13);transform-origin:0 19.93px;-webkit-text-stroke:0.35px #bcbec4;">2024-01-25 10:35:28</div>
<div style="position:absolute;right:599px;top:1204.07px;font-family:'Liberation Mono', monospace;font-size:26px;line-height:26px;font-weight:400;color:#bcbec4;white-space:pre;transform:scaleY(1.13);transform-origin:0 19.93px;-webkit-text-stroke:0.35px #bcbec4;">1</div>
<div style="position:absolute;right:233px;top:1204.07px;font-family:'Liberation Mono', monospace;font-size:26px;line-height:26px;font-weight:400;color:#bcbec4;white-space:pre;transform:scaleY(1.13);transform-origin:0 19.93px;-webkit-text-stroke:0.35px #bcbec4;">0.8</div>
<div style="position:absolute;left:1141px;top:1282px;width:2211px;height:2px;background:#393b40;"></div>
<div style="position:absolute;left:978px;width:400px;text-align:center;top:1250.07px;font-family:'Liberation Mono', monospace;font-size:26px;line-height:26px;font-weight:400;color:#55585e;white-space:pre;transform:scaleY(1.13);transform-origin:0 19.93px;-webkit-text-stroke:0.35px #55585e;">4</div>
<div style="position:absolute;right:1965px;top:1250.07px;font-family:'Liberation Mono', monospace;font-size:26px;line-height:26px;font-weight:400;color:#bcbec4;white-space:pre;transform:scaleY(1.13);transform-origin:0 19.93px;-webkit-text-stroke:0.35px #bcbec4;">1</div>
<div style="position:absolute;left:1515.5px;top:1250.07px;font-family:'Liberation Mono', monospace;font-size:26px;line-height:26px;font-weight:400;color:#bcbec4;white-space:pre;transform:scaleY(1.13);transform-origin:0 19.93px;-webkit-text-stroke:0.35px #bcbec4;">2024-01-25 10:38:32</div>
<div style="position:absolute;left:1991.5px;top:1250.07px;font-family:'Liberation Mono', monospace;font-size:26px;line-height:26px;font-weight:400;color:#bcbec4;white-space:pre;transform:scaleY(1.13);transform-origin:0 19.93px;-webkit-text-stroke:0.35px #bcbec4;">2024-01-25 10:53:20</div>
<div style="position:absolute;right:599px;top:1250.07px;font-family:'Liberation Mono', monospace;font-size:26px;line-height:26px;font-weight:400;color:#bcbec4;white-space:pre;transform:scaleY(1.13);transform-origin:0 19.93px;-webkit-text-stroke:0.35px #bcbec4;">1</div>
<div style="position:absolute;right:233px;top:1250.07px;font-family:'Liberation Mono', monospace;font-size:26px;line-height:26px;font-weight:400;color:#bcbec4;white-space:pre;transform:scaleY(1.13);transform-origin:0 19.93px;-webkit-text-stroke:0.35px #bcbec4;">1.3</div>
<div style="position:absolute;left:1141px;top:1328px;width:2211px;height:2px;background:#393b40;"></div>
<div style="position:absolute;left:978px;width:400px;text-align:center;top:1296.07px;font-family:'Liberation Mono', monospace;font-size:26px;line-height:26px;font-weight:400;color:#55585e;white-space:pre;transform:scaleY(1.13);transform-origin:0 19.93px;-webkit-text-stroke:0.35px #55585e;">5</div>
<div style="position:absolute;right:1965px;top:1296.07px;font-family:'Liberation Mono', monospace;font-size:26px;line-height:26px;font-weight:400;color:#bcbec4;white-space:pre;transform:scaleY(1.13);transform-origin:0 19.93px;-webkit-text-stroke:0.35px #bcbec4;">2</div>
<div style="position:absolute;left:1515.5px;top:1296.07px;font-family:'Liberation Mono', monospace;font-size:26px;line-height:26px;font-weight:400;color:#bcbec4;white-space:pre;transform:scaleY(1.13);transform-origin:0 19.93px;-webkit-text-stroke:0.35px #bcbec4;">2024-01-25 10:10:24</div>
<div style="position:absolute;left:1991.5px;top:1296.07px;font-family:'Liberation Mono', monospace;font-size:26px;line-height:26px;font-weight:400;color:#bcbec4;white-space:pre;transform:scaleY(1.13);transform-origin:0 19.93px;-webkit-text-stroke:0.35px #bcbec4;">2024-01-25 10:23:36</div>
<div style="position:absolute;right:599px;top:1296.07px;font-family:'Liberation Mono', monospace;font-size:26px;line-height:26px;font-weight:400;color:#bcbec4;white-space:pre;transform:scaleY(1.13);transform-origin:0 19.93px;-webkit-text-stroke:0.35px #bcbec4;">1</div>
<div style="position:absolute;right:233px;top:1296.07px;font-family:'Liberation Mono', monospace;font-size:26px;line-height:26px;font-weight:400;color:#bcbec4;white-space:pre;transform:scaleY(1.13);transform-origin:0 19.93px;-webkit-text-stroke:0.35px #bcbec4;">1.07</div>
<div style="position:absolute;left:1141px;top:1374px;width:2211px;height:2px;background:#393b40;"></div>
<div style="position:absolute;left:978px;width:400px;text-align:center;top:1342.07px;font-family:'Liberation Mono', monospace;font-size:26px;line-height:26px;font-weight:400;color:#55585e;white-space:pre;transform:scaleY(1.13);transform-origin:0 19.93px;-webkit-text-stroke:0.35px #55585e;">6</div>
<div style="position:absolute;right:1965px;top:1342.07px;font-family:'Liberation Mono', monospace;font-size:26px;line-height:26px;font-weight:400;color:#bcbec4;white-space:pre;transform:scaleY(1.13);transform-origin:0 19.93px;-webkit-text-stroke:0.35px #bcbec4;">2</div>
<div style="position:absolute;left:1515.5px;top:1342.07px;font-family:'Liberation Mono', monospace;font-size:26px;line-height:26px;font-weight:400;color:#bcbec4;white-space:pre;transform:scaleY(1.13);transform-origin:0 19.93px;-webkit-text-stroke:0.35px #bcbec4;">2024-01-25 10:58:45</div>
<div style="position:absolute;left:1991.5px;top:1342.07px;font-family:'Liberation Mono', monospace;font-size:26px;line-height:26px;font-weight:400;color:#bcbec4;white-space:pre;transform:scaleY(1.13);transform-origin:0 19.93px;-webkit-text-stroke:0.35px #bcbec4;">2024-01-25 11:16:19</div>
<div style="position:absolute;right:599px;top:1342.07px;font-family:'Liberation Mono', monospace;font-size:26px;line-height:26px;font-weight:400;color:#bcbec4;white-space:pre;transform:scaleY(1.13);transform-origin:0 19.93px;-webkit-text-stroke:0.35px #bcbec4;">1</div>
<div style="position:absolute;right:233px;top:1342.07px;font-family:'Liberation Mono', monospace;font-size:26px;line-height:26px;font-weight:400;color:#bcbec4;white-space:pre;transform:scaleY(1.13);transform-origin:0 19.93px;-webkit-text-stroke:0.35px #bcbec4;">1.14</div>
<div style="position:absolute;left:1141px;top:1420px;width:2211px;height:2px;background:#393b40;"></div>
<div style="position:absolute;left:978px;width:400px;text-align:center;top:1388.07px;font-family:'Liberation Mono', monospace;font-size:26px;line-height:26px;font-weight:400;color:#55585e;white-space:pre;transform:scaleY(1.13);transform-origin:0 19.93px;-webkit-text-stroke:0.35px #55585e;">7</div>
<div style="position:absolute;right:1965px;top:1388.07px;font-family:'Liberation Mono', monospace;font-size:26px;line-height:26px;font-weight:400;color:#bcbec4;white-space:pre;transform:scaleY(1.13);transform-origin:0 19.93px;-webkit-text-stroke:0.35px #bcbec4;">2</div>
<div style="position:absolute;left:1515.5px;top:1388.07px;font-family:'Liberation Mono', monospace;font-size:26px;line-height:26px;font-weight:400;color:#bcbec4;white-space:pre;transform:scaleY(1.13);transform-origin:0 19.93px;-webkit-text-stroke:0.35px #bcbec4;">2024-01-25 10:31:28</div>
<div style="position:absolute;left:1991.5px;top:1388.07px;font-family:'Liberation Mono', monospace;font-size:26px;line-height:26px;font-weight:400;color:#bcbec4;white-space:pre;transform:scaleY(1.13);transform-origin:0 19.93px;-webkit-text-stroke:0.35px #bcbec4;">2024-01-25 10:55:43</div>
<div style="position:absolute;right:599px;top:1388.07px;font-family:'Liberation Mono', monospace;font-size:26px;line-height:26px;font-weight:400;color:#bcbec4;white-space:pre;transform:scaleY(1.13);transform-origin:0 19.93px;-webkit-text-stroke:0.35px #bcbec4;">1</div>
<div style="position:absolute;right:233px;top:1388.07px;font-family:'Liberation Mono', monospace;font-size:26px;line-height:26px;font-weight:400;color:#bcbec4;white-space:pre;transform:scaleY(1.13);transform-origin:0 19.93px;-webkit-text-stroke:0.35px #bcbec4;">9.49</div>
<div style="position:absolute;left:1141px;top:1466px;width:2211px;height:2px;background:#393b40;"></div>
<div style="position:absolute;left:978px;width:400px;text-align:center;top:1434.07px;font-family:'Liberation Mono', monospace;font-size:26px;line-height:26px;font-weight:400;color:#55585e;white-space:pre;transform:scaleY(1.13);transform-origin:0 19.93px;-webkit-text-stroke:0.35px #55585e;">8</div>
<div style="position:absolute;right:1965px;top:1434.07px;font-family:'Liberation Mono', monospace;font-size:26px;line-height:26px;font-weight:400;color:#bcbec4;white-space:pre;transform:scaleY(1.13);transform-origin:0 19.93px;-webkit-text-stroke:0.35px #bcbec4;">2</div>
<div style="position:absolute;left:1515.5px;top:1434.07px;font-family:'Liberation Mono', monospace;font-size:26px;line-height:26px;font-weight:400;color:#bcbec4;white-space:pre;transform:scaleY(1.13);transform-origin:0 19.93px;-webkit-text-stroke:0.35px #bcbec4;">2024-01-25 10:03:50</div>
<div style="position:absolute;left:1991.5px;top:1434.07px;font-family:'Liberation Mono', monospace;font-size:26px;line-height:26px;font-weight:400;color:#bcbec4;white-space:pre;transform:scaleY(1.13);transform-origin:0 19.93px;-webkit-text-stroke:0.35px #bcbec4;">2024-01-25 10:42:27</div>
<div style="position:absolute;right:599px;top:1434.07px;font-family:'Liberation Mono', monospace;font-size:26px;line-height:26px;font-weight:400;color:#bcbec4;white-space:pre;transform:scaleY(1.13);transform-origin:0 19.93px;-webkit-text-stroke:0.35px #bcbec4;">1</div>
<div style="position:absolute;right:233px;top:1434.07px;font-family:'Liberation Mono', monospace;font-size:26px;line-height:26px;font-weight:400;color:#bcbec4;white-space:pre;transform:scaleY(1.13);transform-origin:0 19.93px;-webkit-text-stroke:0.35px #bcbec4;">18.6</div>
<div style="position:absolute;left:1141px;top:1512px;width:2211px;height:2px;background:#393b40;"></div>
<div style="position:absolute;left:978px;width:400px;text-align:center;top:1480.07px;font-family:'Liberation Mono', monospace;font-size:26px;line-height:26px;font-weight:400;color:#55585e;white-space:pre;transform:scaleY(1.13);transform-origin:0 19.93px;-webkit-text-stroke:0.35px #55585e;">9</div>
<div style="position:absolute;right:1965px;top:1480.07px;font-family:'Liberation Mono', monospace;font-size:26px;line-height:26px;font-weight:400;color:#bcbec4;white-space:pre;transform:scaleY(1.13);transform-origin:0 19.93px;-webkit-text-stroke:0.35px #bcbec4;">2</div>
<div style="position:absolute;left:1515.5px;top:1480.07px;font-family:'Liberation Mono', monospace;font-size:26px;line-height:26px;font-weight:400;color:#bcbec4;white-space:pre;transform:scaleY(1.13);transform-origin:0 19.93px;-webkit-text-stroke:0.35px #bcbec4;">2024-01-25 10:57:31</div>
<div style="position:absolute;left:1991.5px;top:1480.07px;font-family:'Liberation Mono', monospace;font-size:26px;line-height:26px;font-weight:400;color:#bcbec4;white-space:pre;transform:scaleY(1.13);transform-origin:0 19.93px;-webkit-text-stroke:0.35px #bcbec4;">2024-01-25 11:03:07</div>
<div style="position:absolute;right:599px;top:1480.07px;font-family:'Liberation Mono', monospace;font-size:26px;line-height:26px;font-weight:400;color:#bcbec4;white-space:pre;transform:scaleY(1.13);transform-origin:0 19.93px;-webkit-text-stroke:0.35px #bcbec4;">1</div>
<div style="position:absolute;right:233px;top:1480.07px;font-family:'Liberation Mono', monospace;font-size:26px;line-height:26px;font-weight:400;color:#bcbec4;white-space:pre;transform:scaleY(1.13);transform-origin:0 19.93px;-webkit-text-stroke:0.35px #bcbec4;">0.76</div>
<div style="position:absolute;left:1141px;top:1558px;width:2211px;height:2px;background:#393b40;"></div>
<div style="position:absolute;left:978px;width:400px;text-align:center;top:1526.07px;font-family:'Liberation Mono', monospace;font-size:26px;line-height:26px;font-weight:400;color:#55585e;white-space:pre;transform:scaleY(1.13);transform-origin:0 19.93px;-webkit-text-stroke:0.35px #55585e;">10</div>
<div style="position:absolute;right:1965px;top:1526.07px;font-family:'Liberation Mono', monospace;font-size:26px;line-height:26px;font-weight:400;color:#bcbec4;white-space:pre;transform:scaleY(1.13);transform-origin:0 19.93px;-webkit-text-stroke:0.35px #bcbec4;">1</div>
<div style="position:absolute;left:1515.5px;top:1526.07px;font-family:'Liberation Mono', monospace;font-size:26px;line-height:26px;font-weight:400;color:#bcbec4;white-space:pre;transform:scaleY(1.13);transform-origin:0 19.93px;-webkit-text-stroke:0.35px #bcbec4;">2024-01-25 10:40:41</div>
<div style="position:absolute;left:1991.5px;top:1526.07px;font-family:'Liberation Mono', monospace;font-size:26px;line-height:26px;font-weight:400;color:#bcbec4;white-space:pre;transform:scaleY(1.13);transform-origin:0 19.93px;-webkit-text-stroke:0.35px #bcbec4;">2024-01-25 11:05:18</div>
<div style="position:absolute;right:599px;top:1526.07px;font-family:'Liberation Mono', monospace;font-size:26px;line-height:26px;font-weight:400;color:#bcbec4;white-space:pre;transform:scaleY(1.13);transform-origin:0 19.93px;-webkit-text-stroke:0.35px #bcbec4;">1</div>
<div style="position:absolute;right:233px;top:1526.07px;font-family:'Liberation Mono', monospace;font-size:26px;line-height:26px;font-weight:400;color:#bcbec4;white-space:pre;transform:scaleY(1.13);transform-origin:0 19.93px;-webkit-text-stroke:0.35px #bcbec4;">1.8</div>
<div style="position:absolute;left:1141px;top:1604px;width:2211px;height:2px;background:#393b40;"></div>
<div style="position:absolute;left:978px;width:400px;text-align:center;top:1572.07px;font-family:'Liberation Mono', monospace;font-size:26px;line-height:26px;font-weight:400;color:#55585e;white-space:pre;transform:scaleY(1.13);transform-origin:0 19.93px;-webkit-text-stroke:0.35px #55585e;">11</div>
<div style="position:absolute;right:1965px;top:1572.07px;font-family:'Liberation Mono', monospace;font-size:26px;line-height:26px;font-weight:400;color:#bcbec4;white-space:pre;transform:scaleY(1.13);transform-origin:0 19.93px;-webkit-text-stroke:0.35px #bcbec4;">2</div>
<div style="position:absolute;left:1515.5px;top:1572.07px;font-family:'Liberation Mono', monospace;font-size:26px;line-height:26px;font-weight:400;color:#bcbec4;white-space:pre;transform:scaleY(1.13);transform-origin:0 19.93px;-webkit-text-stroke:0.35px #bcbec4;">2024-01-25 10:05:23</div>
<div style="position:absolute;left:1991.5px;top:1572.07px;font-family:'Liberation Mono', monospace;font-size:26px;line-height:26px;font-weight:400;color:#bcbec4;white-space:pre;transform:scaleY(1.13);transform-origin:0 19.93px;-webkit-text-stroke:0.35px #bcbec4;">2024-01-25 10:14:38</div>
<div style="position:absolute;right:599px;top:1572.07px;font-family:'Liberation Mono', monospace;font-size:26px;line-height:26px;font-weight:400;color:#bcbec4;white-space:pre;transform:scaleY(1.13);transform-origin:0 19.93px;-webkit-text-stroke:0.35px #bcbec4;">1</div>
<div style="position:absolute;right:233px;top:1572.07px;font-family:'Liberation Mono', monospace;font-size:26px;line-height:26px;font-weight:400;color:#bcbec4;white-space:pre;transform:scaleY(1.13);transform-origin:0 19.93px;-webkit-text-stroke:0.35px #bcbec4;">0.68</div>
<div style="position:absolute;left:1141px;top:1650px;width:2211px;height:2px;background:#393b40;"></div>
<div style="position:absolute;left:978px;width:400px;text-align:center;top:1618.07px;font-family:'Liberation Mono', monospace;font-size:26px;line-height:26px;font-weight:400;color:#55585e;white-space:pre;transform:scaleY(1.13);transform-origin:0 19.93px;-webkit-text-stroke:0.35px #55585e;">12</div>
<div style="position:absolute;right:1965px;top:1618.07px;font-family:'Liberation Mono', monospace;font-size:26px;line-height:26px;font-weight:400;color:#bcbec4;white-space:pre;transform:scaleY(1.13);transform-origin:0 19.93px;-webkit-text-stroke:0.35px #bcbec4;">2</div>
<div style="position:absolute;left:1515.5px;top:1618.07px;font-family:'Liberation Mono', monospace;font-size:26px;line-height:26px;font-weight:400;color:#bcbec4;white-space:pre;transform:scaleY(1.13);transform-origin:0 19.93px;-webkit-text-stroke:0.35px #bcbec4;">2024-01-25 10:55:35</div>
<div style="position:absolute;left:1991.5px;top:1618.07px;font-family:'Liberation Mono', monospace;font-size:26px;line-height:26px;font-weight:400;color:#bcbec4;white-space:pre;transform:scaleY(1.13);transform-origin:0 19.93px;-webkit-text-stroke:0.35px #bcbec4;">2024-01-25 11:27:25</div>
<div style="position:absolute;right:599px;top:1618.07px;font-family:'Liberation Mono', monospace;font-size:26px;line-height:26px;font-weight:400;color:#bcbec4;white-space:pre;transform:scaleY(1.13);transform-origin:0 19.93px;-webkit-text-stroke:0.35px #bcbec4;">1</div>
<div style="position:absolute;right:233px;top:1618.07px;font-family:'Liberation Mono', monospace;font-size:26px;line-height:26px;font-weight:400;color:#bcbec4;white-space:pre;transform:scaleY(1.13);transform-origin:0 19.93px;-webkit-text-stroke:0.35px #bcbec4;">11.99</div>
<div style="position:absolute;left:1141px;top:1696px;width:2211px;height:2px;background:#393b40;"></div>
<div style="position:absolute;left:978px;width:400px;text-align:center;top:1664.07px;font-family:'Liberation Mono', monospace;font-size:26px;line-height:26px;font-weight:400;color:#55585e;white-space:pre;transform:scaleY(1.13);transform-origin:0 19.93px;-webkit-text-stroke:0.35px #55585e;">13</div>
<div style="position:absolute;right:1965px;top:1664.07px;font-family:'Liberation Mono', monospace;font-size:26px;line-height:26px;font-weight:400;color:#bcbec4;white-space:pre;transform:scaleY(1.13);transform-origin:0 19.93px;-webkit-text-stroke:0.35px #bcbec4;">2</div>
<div style="position:absolute;left:1515.5px;top:1664.07px;font-family:'Liberation Mono', monospace;font-size:26px;line-height:26px;font-weight:400;color:#bcbec4;white-space:pre;transform:scaleY(1.13);transform-origin:0 19.93px;-webkit-text-stroke:0.35px #bcbec4;">2024-01-25 10:28:12</div>
<div style="position:absolute;left:1991.5px;top:1664.07px;font-family:'Liberation Mono', monospace;font-size:26px;line-height:26px;font-weight:400;color:#bcbec4;white-space:pre;transform:scaleY(1.13);transform-origin:0 19.93px;-webkit-text-stroke:0.35px #bcbec4;">2024-01-25 10:39:19</div>
<div style="position:absolute;right:599px;top:1664.07px;font-family:'Liberation Mono', monospace;font-size:26px;line-height:26px;font-weight:400;color:#bcbec4;white-space:pre;transform:scaleY(1.13);transform-origin:0 19.93px;-webkit-text-stroke:0.35px #bcbec4;">1</div>
<div style="position:absolute;right:233px;top:1664.07px;font-family:'Liberation Mono', monospace;font-size:26px;line-height:26px;font-weight:400;color:#bcbec4;white-space:pre;transform:scaleY(1.13);transform-origin:0 19.93px;-webkit-text-stroke:0.35px #bcbec4;">0.75</div>
<div style="position:absolute;left:1141px;top:1742px;width:2211px;height:2px;background:#393b40;"></div>
<div style="position:absolute;left:978px;width:400px;text-align:center;top:1710.07px;font-family:'Liberation Mono', monospace;font-size:26px;line-height:26px;font-weight:400;color:#55585e;white-space:pre;transform:scaleY(1.13);transform-origin:0 19.93px;-webkit-text-stroke:0.35px #55585e;">14</div>
<div style="position:absolute;right:1965px;top:1710.07px;font-family:'Liberation Mono', monospace;font-size:26px;line-height:26px;font-weight:400;color:#bcbec4;white-space:pre;transform:scaleY(1.13);transform-origin:0 19.93px;-webkit-text-stroke:0.35px #bcbec4;">2</div>
<div style="position:absolute;left:1515.5px;top:1710.07px;font-family:'Liberation Mono', monospace;font-size:26px;line-height:26px;font-weight:400;color:#bcbec4;white-space:pre;transform:scaleY(1.13);transform-origin:0 19.93px;-webkit-text-stroke:0.35px #bcbec4;">2024-01-25 10:47:21</div>
<div style="position:absolute;left:1991.5px;top:1710.07px;font-family:'Liberation Mono', monospace;font-size:26px;line-height:26px;font-weight:400;color:#bcbec4;white-space:pre;transform:scaleY(1.13);transform-origin:0 19.93px;-webkit-text-stroke:0.35px #bcbec4;">2024-01-25 11:04:54</div>
<div style="position:absolute;right:599px;top:1710.07px;font-family:'Liberation Mono', monospace;font-size:26px;line-height:26px;font-weight:400;color:#bcbec4;white-space:pre;transform:scaleY(1.13);transform-origin:0 19.93px;-webkit-text-stroke:0.35px #bcbec4;">2</div>
<div style="position:absolute;right:233px;top:1710.07px;font-family:'Liberation Mono', monospace;font-size:26px;line-height:26px;font-weight:400;color:#bcbec4;white-space:pre;transform:scaleY(1.13);transform-origin:0 19.93px;-webkit-text-stroke:0.35px #bcbec4;">2.06</div>
<div style="position:absolute;left:1141px;top:1788px;width:2211px;height:2px;background:#393b40;"></div>
<div style="position:absolute;left:978px;width:400px;text-align:center;top:1756.07px;font-family:'Liberation Mono', monospace;font-size:26px;line-height:26px;font-weight:400;color:#55585e;white-space:pre;transform:scaleY(1.13);transform-origin:0 19.93px;-webkit-text-stroke:0.35px #55585e;">15</div>
<div style="position:absolute;right:1965px;top:1756.07px;font-family:'Liberation Mono', monospace;font-size:26px;line-height:26px;font-weight:400;color:#bcbec4;white-space:pre;transform:scaleY(1.13);transform-origin:0 19.93px;-webkit-text-stroke:0.35px #bcbec4;">2</div>
<div style="position:absolute;left:1515.5px;top:1756.07px;font-family:'Liberation Mono', monospace;font-size:26px;line-height:26px;font-weight:400;color:#bcbec4;white-space:pre;transform:scaleY(1.13);transform-origin:0 19.93px;-webkit-text-stroke:0.35px #bcbec4;">2024-01-25 10:37:04</div>
<div style="position:absolute;left:1991.5px;top:1756.07px;font-family:'Liberation Mono', monospace;font-size:26px;line-height:26px;font-weight:400;color:#bcbec4;white-space:pre;transform:scaleY(1.13);transform-origin:0 19.93px;-webkit-text-stroke:0.35px #bcbec4;">2024-01-25 11:00:08</div>
<div style="position:absolute;right:599px;top:1756.07px;font-family:'Liberation Mono', monospace;font-size:26px;line-height:26px;font-weight:400;color:#bcbec4;white-space:pre;transform:scaleY(1.13);transform-origin:0 19.93px;-webkit-text-stroke:0.35px #bcbec4;">1</div>
<div style="position:absolute;right:233px;top:1756.07px;font-family:'Liberation Mono', monospace;font-size:26px;line-height:26px;font-weight:400;color:#bcbec4;white-space:pre;transform:scaleY(1.13);transform-origin:0 19.93px;-webkit-text-stroke:0.35px #bcbec4;">2.46</div>
<div style="position:absolute;left:1141px;top:1834px;width:2211px;height:2px;background:#393b40;"></div>
<div style="position:absolute;left:978px;width:400px;text-align:center;top:1802.07px;font-family:'Liberation Mono', monospace;font-size:26px;line-height:26px;font-weight:400;color:#55585e;white-space:pre;transform:scaleY(1.13);transform-origin:0 19.93px;-webkit-text-stroke:0.35px #55585e;">16</div>
<div style="position:absolute;right:1965px;top:1802.07px;font-family:'Liberation Mono', monospace;font-size:26px;line-height:26px;font-weight:400;color:#bcbec4;white-space:pre;transform:scaleY(1.13);transform-origin:0 19.93px;-webkit-text-stroke:0.35px #bcbec4;">2</div>
<div style="position:absolute;left:1515.5px;top:1802.07px;font-family:'Liberation Mono', monospace;font-size:26px;line-height:26px;font-weight:400;color:#bcbec4;white-space:pre;transform:scaleY(1.13);transform-origin:0 19.93px;-webkit-text-stroke:0.35px #bcbec4;">2024-01-25 10:06:24</div>
<div style="position:absolute;left:1991.5px;top:1802.07px;font-family:'Liberation Mono', monospace;font-size:26px;line-height:26px;font-weight:400;color:#bcbec4;white-space:pre;transform:scaleY(1.13);transform-origin:0 19.93px;-webkit-text-stroke:0.35px #bcbec4;">2024-01-25 10:21:26</div>
<div style="position:absolute;right:599px;top:1802.07px;font-family:'Liberation Mono', monospace;font-size:26px;line-height:26px;font-weight:400;color:#bcbec4;white-space:pre;transform:scaleY(1.13);transform-origin:0 19.93px;-webkit-text-stroke:0.35px #bcbec4;">1</div>
<div style="position:absolute;right:233px;top:1802.07px;font-family:'Liberation Mono', monospace;font-size:26px;line-height:26px;font-weight:400;color:#bcbec4;white-space:pre;transform:scaleY(1.13);transform-origin:0 19.93px;-webkit-text-stroke:0.35px #bcbec4;">0.98</div>
<div style="position:absolute;left:1141px;top:1880px;width:2211px;height:2px;background:#393b40;"></div>
<div style="position:absolute;left:978px;width:400px;text-align:center;top:1848.07px;font-family:'Liberation Mono', monospace;font-size:26px;line-height:26px;font-weight:400;color:#55585e;white-space:pre;transform:scaleY(1.13);transform-origin:0 19.93px;-webkit-text-stroke:0.35px #55585e;">17</div>
<div style="position:absolute;right:1965px;top:1848.07px;font-family:'Liberation Mono', monospace;font-size:26px;line-height:26px;font-weight:400;color:#bcbec4;white-space:pre;transform:scaleY(1.13);transform-origin:0 19.93px;-webkit-text-stroke:0.35px #bcbec4;">2</div>
<div style="position:absolute;left:1515.5px;top:1848.07px;font-family:'Liberation Mono', monospace;font-size:26px;line-height:26px;font-weight:400;color:#bcbec4;white-space:pre;transform:scaleY(1.13);transform-origin:0 19.93px;-webkit-text-stroke:0.35px #bcbec4;">2024-01-25 10:39:40</div>
<div style="position:absolute;left:1991.5px;top:1848.07px;font-family:'Liberation Mono', monospace;font-size:26px;line-height:26px;font-weight:400;color:#bcbec4;white-space:pre;transform:scaleY(1.13);transform-origin:0 19.93px;-webkit-text-stroke:0.35px #bcbec4;">2024-01-25 10:49:56</div>
<div style="position:absolute;right:599px;top:1848.07px;font-family:'Liberation Mono', monospace;font-size:26px;line-height:26px;font-weight:400;color:#bcbec4;white-space:pre;transform:scaleY(1.13);transform-origin:0 19.93px;-webkit-text-stroke:0.35px #bcbec4;">1</div>
<div style="position:absolute;right:233px;top:1848.07px;font-family:'Liberation Mono', monospace;font-size:26px;line-height:26px;font-weight:400;color:#bcbec4;white-space:pre;transform:scaleY(1.13);transform-origin:0 19.93px;-webkit-text-stroke:0.35px #bcbec4;">0.43</div>
<div style="position:absolute;left:1141px;top:1926px;width:2211px;height:2px;background:#393b40;"></div>
<div style="position:absolute;left:978px;width:400px;text-align:center;top:1894.07px;font-family:'Liberation Mono', monospace;font-size:26px;line-height:26px;font-weight:400;color:#55585e;white-space:pre;transform:scaleY(1.13);transform-origin:0 19.93px;-webkit-text-stroke:0.35px #55585e;">18</div>
<div style="position:absolute;right:1965px;top:1894.07px;font-family:'Liberation Mono', monospace;font-size:26px;line-height:26px;font-weight:400;color:#bcbec4;white-space:pre;transform:scaleY(1.13);transform-origin:0 19.93px;-webkit-text-stroke:0.35px #bcbec4;">2</div>
<div style="position:absolute;left:1515.5px;top:1894.07px;font-family:'Liberation Mono', monospace;font-size:26px;line-height:26px;font-weight:400;color:#bcbec4;white-space:pre;transform:scaleY(1.13);transform-origin:0 19.93px;-webkit-text-stroke:0.35px #bcbec4;">2024-01-25 10:58:21</div>
<div style="position:absolute;left:1991.5px;top:1894.07px;font-family:'Liberation Mono', monospace;font-size:26px;line-height:26px;font-weight:400;color:#bcbec4;white-space:pre;transform:scaleY(1.13);transform-origin:0 19.93px;-webkit-text-stroke:0.35px #bcbec4;">2024-01-25 11:23:57</div>
<div style="position:absolute;right:599px;top:1894.07px;font-family:'Liberation Mono', monospace;font-size:26px;line-height:26px;font-weight:400;color:#bcbec4;white-space:pre;transform:scaleY(1.13);transform-origin:0 19.93px;-webkit-text-stroke:0.35px #bcbec4;">2</div>
<div style="position:absolute;right:233px;top:1894.07px;font-family:'Liberation Mono', monospace;font-size:26px;line-height:26px;font-weight:400;color:#bcbec4;white-space:pre;transform:scaleY(1.13);transform-origin:0 19.93px;-webkit-text-stroke:0.35px #bcbec4;">1.47</div>
<div style="position:absolute;left:1141px;top:1972px;width:2211px;height:2px;background:#393b40;"></div>
<div style="position:absolute;left:978px;width:400px;text-align:center;top:1940.07px;font-family:'Liberation Mono', monospace;font-size:26px;line-height:26px;font-weight:400;color:#55585e;white-space:pre;transform:scaleY(1.13);transform-origin:0 19.93px;-webkit-text-stroke:0.35px #55585e;">19</div>
<div style="position:absolute;right:1965px;top:1940.07px;font-family:'Liberation Mono', monospace;font-size:26px;line-height:26px;font-weight:400;color:#bcbec4;white-space:pre;transform:scaleY(1.13);transform-origin:0 19.93px;-webkit-text-stroke:0.35px #bcbec4;">1</div>
<div style="position:absolute;left:1515.5px;top:1940.07px;font-family:'Liberation Mono', monospace;font-size:26px;line-height:26px;font-weight:400;color:#bcbec4;white-space:pre;transform:scaleY(1.13);transform-origin:0 19.93px;-webkit-text-stroke:0.35px #bcbec4;">2024-01-25 10:02:08</div>
<div style="position:absolute;left:1991.5px;top:1940.07px;font-family:'Liberation Mono', monospace;font-size:26px;line-height:26px;font-weight:400;color:#bcbec4;white-space:pre;transform:scaleY(1.13);transform-origin:0 19.93px;-webkit-text-stroke:0.35px #bcbec4;">2024-01-25 10:25:10</div>
<div style="position:absolute;right:599px;top:1940.07px;font-family:'Liberation Mono', monospace;font-size:26px;line-height:26px;font-weight:400;color:#bcbec4;white-space:pre;transform:scaleY(1.13);transform-origin:0 19.93px;-webkit-text-stroke:0.35px #bcbec4;">1</div>
<div style="position:absolute;right:233px;top:1940.07px;font-family:'Liberation Mono', monospace;font-size:26px;line-height:26px;font-weight:400;color:#bcbec4;white-space:pre;transform:scaleY(1.13);transform-origin:0 19.93px;-webkit-text-stroke:0.35px #bcbec4;">1.7</div>
<div style="position:absolute;left:1218px;top:1100px;width:2px;height:858px;background:#393b40;"></div>
<div style="position:absolute;left:1506px;top:1100px;width:2px;height:858px;background:#393b40;"></div>
<div style="position:absolute;left:1982px;top:1100px;width:2px;height:858px;background:#393b40;"></div>
<div style="position:absolute;left:2474px;top:1100px;width:2px;height:858px;background:#393b40;"></div>
<div style="position:absolute;left:2872px;top:1100px;width:2px;height:858px;background:#393b40;"></div>
<div style="position:absolute;left:3238px;top:1100px;width:2px;height:858px;background:#393b40;"></div>
<div style="position:absolute;left:112px;top:1958px;width:3240px;height:2px;background:#1e1f22;"></div>
<div style="position:absolute;left:112px;top:1960px;width:3240px;height:58px;background:#2b2d30;"></div>
<div style="position:absolute;left:140px;top:1973.32px;font-family:'Liberation Sans', sans-serif;font-size:27.5px;line-height:27.5px;font-weight:400;color:#a8abb0;white-space:pre;-webkit-text-stroke:0.5px #a8abb0;">Database Consoles</div>
<svg style="position:absolute;left:398px;top:1978px;overflow:visible;" width="11" height="20" viewBox="0 0 11 20" fill="none"><path d="M1 1 L10 10 L1 19" stroke="#a8abb0" stroke-width="2.2" fill="none" stroke-linecap="round" stroke-linejoin="round"/></svg>
<div style="position:absolute;left:426px;top:1973.32px;font-family:'Liberation Sans', sans-serif;font-size:27.5px;line-height:27.5px;font-weight:400;color:#a8abb0;white-space:pre;-webkit-text-stroke:0.5px #a8abb0;">Arrow Flight JDBC - @localhost</div>
<svg style="position:absolute;left:833px;top:1978px;overflow:visible;" width="11" height="20" viewBox="0 0 11 20" fill="none"><path d="M1 1 L10 10 L1 19" stroke="#a8abb0" stroke-width="2.2" fill="none" stroke-linecap="round" stroke-linejoin="round"/></svg>
<svg style="position:absolute;left:865.5px;top:1974px;overflow:visible;" width="25" height="25" viewBox="0 0 25 25" fill="none"><g stroke-width="2.2" fill="none" stroke-linecap="butt"><path d="M4.6 1.2 H20.2 M9.1 1.2 V4.6 M15.7 1.2 V4.6" stroke="#ced0d6"/><path d="M1.1 4.2 V19.9 M1.1 9.7 H5.1 M1.1 15.3 H5.1" stroke="#ced0d6"/><path d="M23.6 4.2 V18.5 M23.6 9.7 H19.6 M23.6 15.3 H19.6" stroke="#548af7"/><path d="M4.6 23.1 H20.2 M9.1 23.1 V19.7 M15.7 23.1 V19.7" stroke="#548af7"/></g></svg>
<div style="position:absolute;left:903px;top:1973.32px;font-family:'Liberation Sans', sans-serif;font-size:27.5px;line-height:27.5px;font-weight:400;color:#a8abb0;white-space:pre;-webkit-text-stroke:0.5px #a8abb0;">console</div>
<div style="position:absolute;left:2818px;top:1973.32px;font-family:'Liberation Sans', sans-serif;font-size:27.5px;line-height:27.5px;font-weight:400;color:#a8abb0;white-space:pre;-webkit-text-stroke:0.5px #a8abb0;">1:26</div>
<div style="position:absolute;left:2903px;top:1973.32px;font-family:'Liberation Sans', sans-serif;font-size:27.5px;line-height:27.5px;font-weight:400;color:#a8abb0;white-space:pre;-webkit-text-stroke:0.5px #a8abb0;">LF</div>
<div style="position:absolute;left:2965px;top:1973.32px;font-family:'Liberation Sans', sans-serif;font-size:27.5px;line-height:27.5px;font-weight:400;color:#a8abb0;white-space:pre;-webkit-text-stroke:0.5px #a8abb0;">UTF-8</div>
<div style="position:absolute;left:3077px;top:1973.32px;font-family:'Liberation Sans', sans-serif;font-size:27.5px;line-height:27.5px;font-weight:400;color:#a8abb0;white-space:pre;-webkit-text-stroke:0.5px #a8abb0;">4 spaces</div>
<svg style="position:absolute;left:3225px;top:1974px;overflow:visible;" width="28" height="26" viewBox="0 0 28 26" fill="none"><g stroke="#ced0d6" stroke-width="2.2" fill="none" stroke-linecap="round"><rect x="1.2" y="11" width="19" height="14" rx="3"/><path d="M15 11 V7 Q15 1.5 20.5 1.5 Q26 1.5 26 7 V9"/><path d="M10.7 16 V20"/></g></svg>
<svg style="position:absolute;left:3287px;top:1974px;overflow:visible;" width="26" height="28" viewBox="0 0 26 28" fill="none"><g stroke="#ced0d6" stroke-width="2.2" fill="none" stroke-linejoin="round"><path d="M13 1.5 Q21.5 1.5 21.5 11 V19 L25 23 H1 L4.5 19 V11 Q4.5 1.5 13 1.5 Z"/></g><path d="M9.5 25.5 Q13 29 16.5 25.5 Z" fill="#ced0d6"/></svg>
</div>
<div style="position:absolute;left:112px;top:76px;width:3240px;height:1942px;border-radius:20px;box-shadow:inset 0 0 0 2px rgba(140,142,148,0.47), inset 0 2px 0 0 rgba(190,190,195,0.32);pointer-events:none;"></div>
</body></html>
